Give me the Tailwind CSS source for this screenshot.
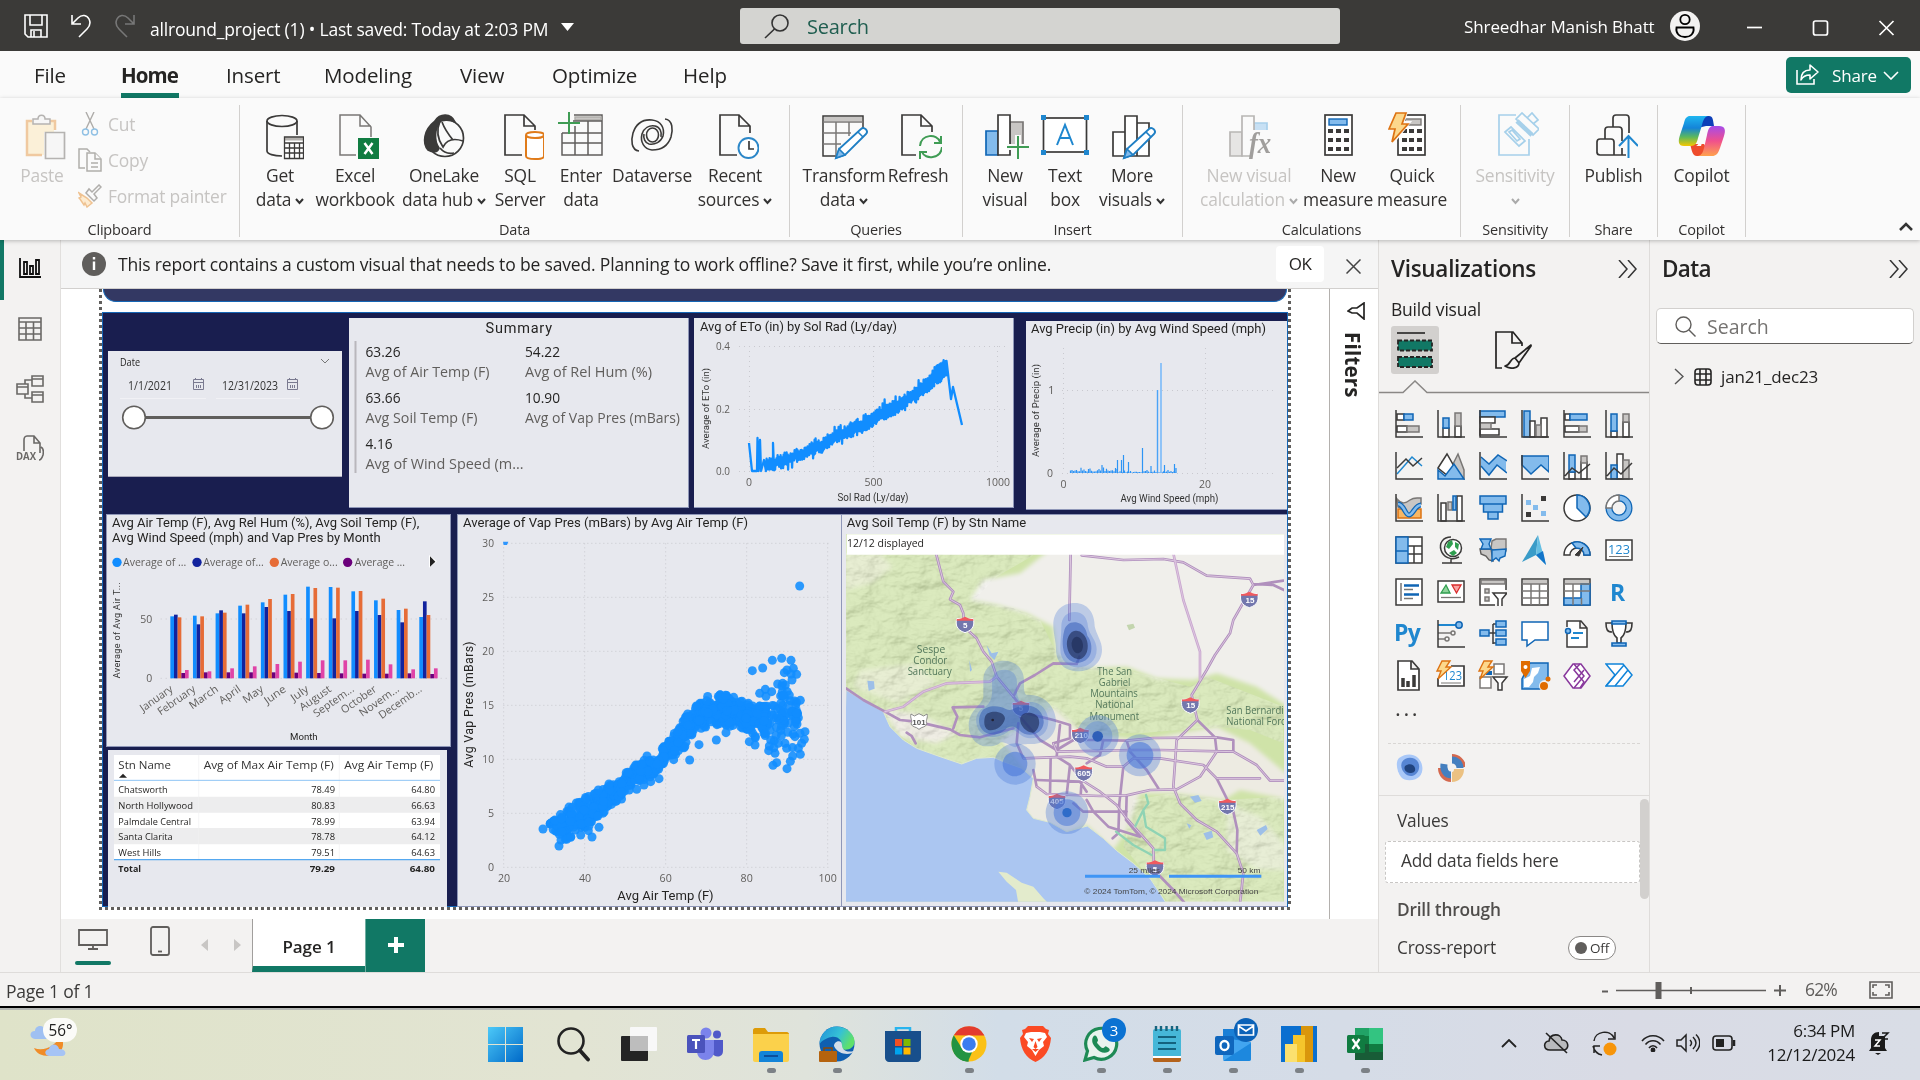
<!DOCTYPE html>
<html lang="en">
<head>
<meta charset="utf-8">
<title>allround_project (1)</title>
<script src="https://cdn.jsdelivr.net/npm/@tailwindcss/browser@4"></script>
</head>
<body class="w-[1920px] h-[1080px] overflow-hidden flex flex-col bg-[#f3f2f1] text-[#252423] font-['Open_Sans','Noto_Sans',sans-serif] whitespace-nowrap">

<!-- Title bar -->
<header class="h-[51px] shrink-0 bg-[#3b3a38] flex items-center text-white">
  <svg class="ml-6 w-6 h-6 shrink-0" viewBox="0 0 24 24" fill="none" stroke="#fff" stroke-width="1.6"><path d="M1 1h22v22H4l-3-3z"/><path d="M6 1v10h12V1M7 23v-7h10v7M10 17v6"/></svg>
  <svg class="ml-[22px] w-[22px] h-6 shrink-0" viewBox="0 0 22 24" fill="none" stroke="#fff" stroke-width="1.6"><path d="M2 1v9h9M2 10l6-6c4-4 9-3 11 1s1 7-2 10l-8 8"/></svg>
  <svg class="ml-[22px] w-[22px] h-6 shrink-0" viewBox="0 0 22 24" fill="none" stroke="#777" stroke-width="1.6"><path d="M20 1v9h-9M20 10l-6-6c-4-4-9-3-11 1s-1 7 2 10l8 8"/></svg>
  <div class="ml-[14px] mt-[8px] w-[401px] text-[17.5px] tracking-[-0.011em]">allround_project (1) • Last saved: Today at 2:03 PM</div>
  <svg class="ml-[10px] mt-[3px] w-[13px] h-2 shrink-0" viewBox="0 0 13 8"><path d="M0 0h13L6.500 8z" fill="#fff"/></svg>
  <div class="ml-[166px] w-[600px] h-9 shrink-0 rounded-[3px] bg-[#d4d4d1] flex items-center">
    <svg class="ml-6 w-[26px] h-[26px]" viewBox="0 0 26 26" fill="none" stroke="#333" stroke-width="1.6"><circle cx="16" cy="10" r="8"/><path d="M10.500 16L1 25"/></svg>
    <span class="ml-[17px] mt-[3px] text-[20px] tracking-[-0.012em] text-[#205e50]">Search</span>
  </div>
  <div class="ml-[124px] mt-[2px] w-[191px] text-[17px] tracking-[-0.006em]">Shreedhar Manish Bhatt</div>
  <svg class="ml-[15px] w-[30px] h-[30px] shrink-0" viewBox="0 0 30 30" fill="none"><circle cx="15" cy="15" r="15" fill="#f3f2f1"/><circle cx="15" cy="8.500" r="4.700" stroke="#000" stroke-width="1.800"/><path d="M6.500 16.500h17c1 6-3 9.500-8.500 9.500s-9.500-3.500-8.500-9.500z" stroke="#000" stroke-width="1.800"/></svg>
  <svg class="ml-[47px] w-[149px] h-4 shrink-0 mt-[5px]" viewBox="0 0 149 16" fill="none" stroke="#fff" stroke-width="1.700"><path d="M0 7.500h15"/><rect x="66.500" y="1" width="14" height="14" rx="2"/><path d="M132.500 1l14 14M146.500 1l-14 14"/></svg>
</header>

<!-- Ribbon tabs -->
<nav class="h-[47px] shrink-0 bg-[#fafafa] flex text-[20.5px] leading-[49px] tracking-[-0.006em] pl-[34px] gap-[47px] relative">
  <div class="w-[31px] mr-[9px]">File</div>
  <div class="w-[58px] font-bold border-b-[5px] border-[#117865] tracking-[-0.045em]">Home</div>
  <div class="w-[51px]">Insert</div>
  <div class="w-[89px]">Modeling</div>
  <div class="w-[45px]">View</div>
  <div class="w-[84px]">Optimize</div>
  <div class="w-[43px]">Help</div>
  <button class="ml-auto mr-[9px] mt-[6px] w-[125px] h-9 rounded-[5px] bg-[#117865] text-white flex items-center text-[17px] tracking-[-0.01em]">
    <svg class="ml-[10px] w-6 h-[22px]" viewBox="0 0 24 22" fill="none" stroke="#fff" stroke-width="1.600"><path d="M1 6v14h17v-5"/><path d="M5 16C5 9 9 6 14 6V1l8 7-8 7v-4c-4 0-7 1-9 5z" stroke-linejoin="round"/></svg>
    <span class="ml-[12px]">Share</span>
    <svg class="ml-[6px] w-4 h-[9px]" viewBox="0 0 16 9" fill="none" stroke="#fff" stroke-width="1.600"><path d="M1 1l7 7 7-7"/></svg>
  </button>
</nav>

<!-- Ribbon -->
<section class="h-[142px] shrink-0 bg-[#fafafa] flex pt-[7px] relative z-10 shadow-[0_1px_4px_rgba(0,0,0,.25)] text-[17.4px] leading-6 tracking-[-0.012em] text-center text-[#333130]">
  <div class="w-[240px] h-[132px] border-r border-[#d2d0ce] flex flex-col">
    <div class="flex-1 flex text-[#c6c4c2]">
      <div class="ml-[18px] w-[48px] pt-[7px] flex flex-col items-center">
        <svg class="w-12 h-12" viewBox="0 0 48 48" fill="none"><path d="M9 9h27v11H26v23H9z" fill="#fbf0d8"/><path d="M24 43H9V9h5M31 9h6v9" stroke="#f0c9a0" stroke-width="2.500"/><path d="M15 12V7h5c0-5 7-5 7 0h5v5z" fill="#f6f6f6" stroke="#b5b3b1" stroke-width="1.500"/><path d="M27.500 20.500h19v26h-19z" fill="#f6f6f6" stroke="#b5b3b1" stroke-width="1.700"/></svg>
        <span class="mt-[3px]">Paste</span>
      </div>
      <div class="ml-3 pt-[7px] flex flex-col items-start gap-3">
        <div class="flex items-center gap-[6px]"><svg class="w-6 h-6" viewBox="0 0 24 24" fill="none" stroke="#aeaca9" stroke-width="1.400"><path d="M8 0l8 17M16 0L8 17"/><circle cx="7.500" cy="20" r="3" stroke="#8fc0e4"/><circle cx="16.500" cy="20" r="3" stroke="#8fc0e4"/></svg>Cut</div>
        <div class="flex items-center gap-[6px]"><svg class="w-6 h-6" viewBox="0 0 24 24" fill="#fafafa" stroke="#b0aeab" stroke-width="1.500"><path d="M7 20H1V1h8l3 3"/><path d="M9 5h8l6 6v12H9z"/><path d="M17 5v6h6M13 15h7M13 19h7"/></svg>Copy</div>
        <div class="flex items-center gap-[6px]"><svg class="w-6 h-6" viewBox="0 0 24 24" fill="none" stroke-width="1.500"><path d="M1 9l8 5 5 5-5 4-2-4-1 2-4-6-1-1 2-1z" fill="#fdebd0" stroke="#efc291"/><path d="M8 9l8 8 3-3-3-4 7-7-2-2-7 7-3-3z" fill="#fafafa" stroke="#b0aeab"/></svg>Format painter</div>
      </div>
    </div>
    <div class="text-[14.5px] leading-[18px] -mb-[2px]">Clipboard</div>
  </div>

  <div class="w-[550px] h-[132px] border-r border-[#d2d0ce] flex flex-col">
    <div class="flex-1 flex pl-1">
      <div class="w-[72px] pt-[7px] flex flex-col items-center">
        <svg class="w-12 h-12" viewBox="-1 0 48 48" fill="none" stroke="#3b3a39" stroke-width="1.700"><path d="M25 44c-8 0-15-2-15-5V9M40 9v14"/><ellipse cx="25" cy="9" rx="15" ry="5.500"/><rect x="27" y="25" width="22" height="22" fill="#fff" stroke="none"/><path d="M27 27h20" stroke="#b3b0ad" stroke-width="3"/><path d="M27.500 25h19v21.500h-19zM27 31h20M27 36h20M27 41h20M32.500 31v16M37.500 31v16M42.500 31v16" stroke-width="1.300"/></svg>
        <div class="mt-[3px]">Get<br>data<svg class="inline ml-1 w-[9px] h-[7px]" viewBox="0 0 9 7" fill="none" stroke="#333" stroke-width="2"><path d="M1 1l3.500 4L8 1"/></svg></div>
      </div>
      <div class="w-[78px] pt-[7px] flex flex-col items-center">
        <svg class="w-12 h-12" viewBox="0 0 48 48" fill="none" stroke="#797775" stroke-width="1.500"><path d="M25 43H9V3h20l11 12v10M29 3v11h11"/><rect x="27" y="26" width="21" height="21" fill="#107c41" stroke="none"/><path d="M33.500 31l8 11M41.500 31l-8 11" stroke="#fff" stroke-width="2.500"/></svg>
        <div class="mt-[3px] flex flex-col items-center"><span>Excel</span><span>workbook</span></div>
      </div>
      <div class="w-[100px] pt-[7px] flex flex-col items-center">
        <svg class="w-12 h-12" viewBox="0 0 48 48" fill="none" stroke="#3b3a39" stroke-width="1.700"><path d="M14 10C4 18 2 31 8 38c6 3 10 2 11-2C14 29 14 17 21 8z" fill="#3b3a39"/><circle cx="25" cy="26" r="18.500"/><path d="M15 9c5-8 16-8 20 1-6-3-13-2-16 0z" fill="#3b3a39"/><path d="M20 9c-4 10-2 19 3 26 4-8 11-9 20-6M22 10c3 8 6 12 11 18M20 36c4 5 9 6 14 5"/></svg>
        <div class="mt-[3px]">OneLake<br>data hub<svg class="inline ml-1 w-[9px] h-[7px]" viewBox="0 0 9 7" fill="none" stroke="#333" stroke-width="2"><path d="M1 1l3.500 4L8 1"/></svg></div>
      </div>
      <div class="w-[52px] pt-[7px] flex flex-col items-center">
        <svg class="w-12 h-12" viewBox="0 0 48 48" fill="none" stroke="#3b3a39" stroke-width="1.700"><path d="M26 43H9V3h19l11 11v4M28 3v11h11"/><path d="M30 23v21c0 4 18 4 18 0V23" fill="#fff" stroke="#e07b1a" stroke-width="2"/><ellipse cx="39" cy="23" rx="9" ry="3" fill="#fff" stroke="#e07b1a" stroke-width="2"/></svg>
        <div class="mt-[3px]">SQL<br>Server</div>
      </div>
      <div class="w-[70px] pt-[7px] flex flex-col items-center">
        <svg class="w-12 h-12" viewBox="0 0 48 48" fill="none" stroke="#605e5c" stroke-width="1.500"><path d="M5 21v22h40V3H17"/><path d="M18 5h26v3H18z" fill="#c8c6c4" stroke="#b0aeab"/><path d="M16 9h29M5 21h40M5 31h40M18 14v29M31 9v34"/><path d="M1 11h22M12 0v22" stroke="#3f9c54" stroke-width="2"/></svg>
        <div class="mt-[3px]">Enter<br>data</div>
      </div>
      <div class="w-[72px] pt-[7px] flex flex-col items-center">
        <svg class="w-12 h-12" viewBox="0 0 48 48" fill="none" stroke="#3b3a39" stroke-width="1.600"><path d="M37 7c8 1 8 11 6 18-3 9-9 13-19 13-8-1-12-8-10-16 2-6 7-9 13-8 5 1 7 6 6 11"/><path d="M11 39c-8-1-8-11-6-18C8 12 14 7 24 8c9 1 13 8 11 16-2 6-8 9-14 8-4-1-6-6-5-10"/><ellipse cx="24.500" cy="23" rx="6" ry="7"/></svg>
        <div class="mt-[3px]">Dataverse</div>
      </div>
      <div class="w-[94px] pt-[7px] flex flex-col items-center">
        <svg class="w-12 h-12" viewBox="0 0 48 48" fill="none" stroke="#3b3a39" stroke-width="1.700"><path d="M26 43H9V3h19l11 11v7M28 3v11h11"/><circle cx="37.500" cy="36" r="10" fill="#fff" stroke="#2c87c8" stroke-width="1.900"/><path d="M38 29v8h5"/></svg>
        <div class="mt-[3px]">Recent<br>sources<svg class="inline ml-1 w-[9px] h-[7px]" viewBox="0 0 9 7" fill="none" stroke="#333" stroke-width="2"><path d="M1 1l3.500 4L8 1"/></svg></div>
      </div>
    </div>
    <div class="text-[14.5px] leading-[18px] -mb-[2px]">Data</div>
  </div>

  <div class="w-[173px] h-[132px] border-r border-[#d2d0ce] flex flex-col">
    <div class="flex-1 flex pl-[9px]">
      <div class="w-[90px] pt-[7px] flex flex-col items-center">
        <svg class="w-12 h-12" viewBox="0 0 48 48" fill="none" stroke="#797775" stroke-width="1.500"><path d="M19 44H3V4h40v12" stroke="#3b3a39"/><path d="M4 5h38v4H4z" fill="#c8c6c4" stroke="none"/><path d="M3 10h40M3 21h28M3 32h18M16 10v34M29 10v14"/><path d="M16 46l3-9 22-20c3-3 8 2 5 5L25 43z" fill="#fff" stroke="#1f7fc4" stroke-width="1.800"/><path d="M16 46l3-9 6 6z" fill="#83bbec" stroke="#1f7fc4"/><path d="M38 20l5 5" stroke="#1f7fc4"/></svg>
        <div class="mt-[3px]">Transform<br>data<svg class="inline ml-1 w-[9px] h-[7px]" viewBox="0 0 9 7" fill="none" stroke="#333" stroke-width="2"><path d="M1 1l3.500 4L8 1"/></svg></div>
      </div>
      <div class="w-[58px] pt-[7px] flex flex-col items-center">
        <svg class="w-12 h-12" viewBox="0 0 48 48" fill="none" stroke="#3b3a39" stroke-width="1.700"><path d="M22 43H8V3h19l11 11v6M27 3v11h11"/><path d="M26 34c1-12 17-13 20-4M48 35c-1 12-17 13-20 5M47 24v7h-7M26 47v-7h7" stroke="#3f9c54" stroke-width="2"/></svg>
        <div class="mt-[3px]">Refresh</div>
      </div>
    </div>
    <div class="text-[14.5px] leading-[18px] -mb-[2px]">Queries</div>
  </div>

  <div class="w-[220px] h-[132px] border-r border-[#d2d0ce] flex flex-col">
    <div class="flex-1 flex pl-[12px]">
      <div class="w-[60px] pt-[7px] flex flex-col items-center">
        <svg class="w-12 h-12" viewBox="0 0 48 48" fill="none" stroke-width="1.700"><path d="M29 10h13v24H29z" fill="#c8c6c4" stroke="#797775"/><path d="M5 19h12v24H5z" fill="#83bbec" stroke="#1066b5"/><path d="M17 3h12v40H17z" fill="#fff" stroke="#3b3a39"/><path d="M26 35h24M37 23v24" stroke="#fafafa" stroke-width="6"/><path d="M26 35h22M37 24v23" stroke="#3f9c54" stroke-width="2"/></svg>
        <div class="mt-[3px]">New<br>visual</div>
      </div>
      <div class="w-[60px] pt-[7px] flex flex-col items-center">
        <svg class="w-12 h-12" viewBox="0 0 48 48" fill="none"><rect x="2.500" y="6" width="43" height="34" fill="#fff" stroke="#3b3a39" stroke-width="1.700"/><path d="M0 3h5v5H0zM43 3h5v5h-5zM0 38h5v5H0zM43 38h5v5h-5z" fill="#1f87cf"/><path d="M16 33l8-20 8 20M19 26h10" stroke="#1f87cf" stroke-width="2"/></svg>
        <div class="mt-[3px]">Text<br>box</div>
      </div>
      <div class="w-[74px] pt-[7px] flex flex-col items-center">
        <svg class="w-12 h-12" viewBox="0 0 48 48" fill="none" stroke="#3b3a39" stroke-width="1.700"><path d="M5 20h12v24H5zM17 4h12v40H17zM29 11h12v33H29z" fill="#fff"/><path d="M16 46l3-9 22-20c3-3 8 2 5 5L25 43z" fill="#fff" stroke="#1f7fc4" stroke-width="1.800"/><path d="M16 46l3-9 6 6z" fill="#83bbec" stroke="#1f7fc4"/><path d="M38 20l5 5" stroke="#1f7fc4"/></svg>
        <div class="mt-[3px]">More<br>visuals<svg class="inline ml-1 w-[9px] h-[7px]" viewBox="0 0 9 7" fill="none" stroke="#333" stroke-width="2"><path d="M1 1l3.500 4L8 1"/></svg></div>
      </div>
    </div>
    <div class="text-[14.5px] leading-[18px] -mb-[2px]">Insert</div>
  </div>

  <div class="w-[278px] h-[132px] border-r border-[#d2d0ce] flex flex-col">
    <div class="flex-1 flex pl-[15px]">
      <div class="w-[102px] pt-[7px] flex flex-col items-center text-[#c6c4c2]">
        <svg class="w-12 h-12" viewBox="0 0 48 48" fill="none" stroke="#b8b6b4" stroke-width="1.700"><path d="M29 11h13v8H29z" fill="#c7e0f4" stroke="#a9cfea"/><path d="M5 20h12v24H5z" fill="#e6e5e4"/><path d="M17 4h12v40H17z" fill="#fafafa"/><path d="M25 18h24v28H25z" fill="#fafafa" stroke="none"/><text x="24" y="41" font-family="Liberation Serif, serif" font-style="italic" font-weight="bold" font-size="30" fill="#a09e9c" stroke="none" textLength="22" lengthAdjust="spacingAndGlyphs">fx</text></svg>
        <div class="mt-[3px]">New visual<br>calculation<svg class="inline ml-1 w-[9px] h-[7px]" viewBox="0 0 9 7" fill="none" stroke="#aaa" stroke-width="2"><path d="M1 1l3.500 4L8 1"/></svg></div>
      </div>
      <div class="w-[76px] pt-[7px] flex flex-col items-center">
        <svg class="w-12 h-12" viewBox="0 0 48 48"><rect x="11" y="3" width="27" height="40" fill="#fff" stroke="#3b3a39" stroke-width="1.700"/><rect x="15" y="7" width="18" height="6" fill="#83bbec" stroke="#1066b5" stroke-width="1.400"/><path d="M14 17h5v4h-5zM22 17h5v4h-5zM30 17h5v4h-5zM14 26h5v4h-5zM22 26h5v4h-5zM30 26h5v4h-5zM14 35h5v4h-5zM22 35h5v4h-5zM30 35h5v4h-5z" fill="#3b3a39"/></svg>
        <div class="mt-[3px]">New<br>measure</div>
      </div>
      <div class="w-[72px] pt-[7px] flex flex-col items-center">
        <svg class="w-12 h-12" viewBox="0 0 48 48"><rect x="10" y="3" width="27" height="40" fill="#fff" stroke="#3b3a39" stroke-width="1.700"/><rect x="17" y="7" width="16" height="6" fill="#c8c6c4" stroke="#797775" stroke-width="1.400"/><path d="M14 17h5v4h-5zM21 17h5v4h-5zM29 17h5v4h-5zM14 26h5v4h-5zM21 26h5v4h-5zM29 26h5v4h-5zM14 35h5v4h-5zM21 35h5v4h-5zM29 35h5v4h-5z" fill="#3b3a39"/><path d="M8 0h10l-4 11h6L4 31l3-14H1z" fill="#fcd88c" stroke="#fafafa" stroke-width="4"/><path d="M8 1h10l-4 11h6L4 30l3-13H1z" fill="#fcd88c" stroke="#dd7312" stroke-width="1.700"/></svg>
        <div class="mt-[3px] flex flex-col items-center"><span>Quick</span><span>measure</span></div>
      </div>
    </div>
    <div class="text-[14.5px] leading-[18px] -mb-[2px]">Calculations</div>
  </div>

  <div class="w-[109px] h-[132px] border-r border-[#d2d0ce] flex flex-col">
    <div class="flex-1 pt-[7px] flex flex-col items-center text-[#c6c4c2]">
      <svg class="w-12 h-12" viewBox="0 0 48 48" fill="none" stroke="#a6d0ea" stroke-width="1.700"><path d="M25 3H8v40h30V27"/><path d="M14 20l6-5 14 14-6 5zM18 20l3-2 8 9-3 2z"/><path d="M25 7l6-6 17 16-6 6z"/><path d="M26 9l15 14" stroke-width="4.500"/><path d="M36 6l5-5 6 7-5 4"/></svg>
      <div class="mt-[3px]">Sensitivity<br><svg class="inline w-[11px] h-[7px]" viewBox="0 0 9 7" fill="none" stroke="#aaa" stroke-width="2"><path d="M1 1l3.500 4L8 1"/></svg></div>
    </div>
    <div class="text-[14.5px] leading-[18px] -mb-[2px]">Sensitivity</div>
  </div>
  <div class="w-[88px] h-[132px] border-r border-[#d2d0ce] flex flex-col">
    <div class="flex-1 pt-[7px] flex flex-col items-center">
      <svg class="w-12 h-12" viewBox="0 0 48 48" fill="none" stroke="#3b3a39" stroke-width="1.700"><path d="M23 15V6c0-2 1-3 3-3h10c2 0 3 1 3 3v15M15 27V18c0-2 1-3 3-3h11c2 0 3 1 3 3v11M7 41V30c0-2 1-3 3-3h11c2 0 3 1 3 3v13M7 40c0 2 1 3 3 3h26M32 36v7"/><path d="M38.500 46V24M29 34l9.500-10 9.500 10" stroke="#1f87cf" stroke-width="2"/></svg>
      <div class="mt-[3px]">Publish</div>
    </div>
    <div class="text-[14.5px] leading-[18px] -mb-[2px]">Share</div>
  </div>
  <div class="w-[88px] h-[132px] border-r border-[#d2d0ce] flex flex-col">
    <div class="flex-1 pt-[7px] flex flex-col items-center">
      <svg class="w-12 h-12" viewBox="0 0 48 48"><defs><linearGradient id="cpa" x1="0" y1="0" x2="0" y2="1"><stop offset="0" stop-color="#1fb6f0"/><stop offset=".4" stop-color="#1484d8"/><stop offset=".7" stop-color="#5cb85c"/><stop offset="1" stop-color="#f5c800"/></linearGradient><linearGradient id="cpb" x1="0" y1="0" x2="0" y2="1"><stop offset="0" stop-color="#a64bea"/><stop offset=".5" stop-color="#f0508c"/><stop offset="1" stop-color="#ffa24d"/></linearGradient></defs>
      <path d="M18 4h13c4 0 4 4 5 10h-8l-8 2z" fill="#0d3fb8"/><path d="M12 32h14l6 10-6 2h-7c-5 0-5-6-7-12z" fill="#ee4c2c"/><path d="M12 4h18c-4 1-5 5-6 9l-4 13c-1 5-3 8-7 8H6c-6 0-6-5-4-11L6 11c1-5 3-7 6-7z" fill="url(#cpa)"/><path d="M27 14h14c6 0 7 4 5 10l-4 12c-2 6-4 8-8 8H20c4-1 5-4 6-8l3-13c1-5 2-8 5-9z" fill="url(#cpb)"/><path d="M24 15h5l-6 19h-5c3-1 4-5 6-19z" fill="#fafafa"/></svg>
      <div class="mt-[3px]">Copilot</div>
    </div>
    <div class="text-[14.5px] leading-[18px] -mb-[2px]">Copilot</div>
  </div>
  <svg class="ml-auto mr-[7px] mt-[117px] w-[14px] h-[9px]" viewBox="0 0 14 9" fill="none" stroke="#333" stroke-width="2.500"><path d="M1 8l6-6 6 6"/></svg>
</section>

<!-- Workspace -->
<main class="h-[732px] shrink-0 flex">
  <aside class="w-[61px] border-r border-[#e1dfdd] bg-[#f3f2f1] flex flex-col">
    <div class="h-[60px] border-l-4 border-[#117865] flex items-center justify-center pr-1 pb-1"><svg class="w-6 h-6" viewBox="0 0 24 24" fill="none" stroke="#111" stroke-width="1.800"><path d="M2 2v19h21M6 6h3v12H6zM12 10h3v8h-3zM18 4h3v14h-3z"/></svg></div>
    <div class="h-[60px] flex items-center justify-center pb-[3px]"><svg class="w-6 h-6" viewBox="0 0 24 24" fill="none" stroke="#6a6866" stroke-width="1.600"><path d="M1 1h22v22H1zM1 5h22M1 11h22M1 17h22M8 5v18M15.500 5v18"/></svg></div>
    <div class="h-[60px] flex items-center justify-center pb-[3px]"><svg class="w-7 h-7" viewBox="0 0 28 28" fill="none" stroke="#6a6866" stroke-width="1.600"><path d="M1 9h11v10H1zM16 1h11v10H16zM16 17h11v10H16zM1 12h11M16 4h11M16 20h11M9 9V5h7M9 19v4h7"/></svg></div>
    <div class="h-[60px] flex items-center justify-center pb-[2px]"><svg class="w-7 h-7" viewBox="0 0 28 28" fill="none" stroke="#6a6866" stroke-width="1.600"><path d="M8 16V5c0-2 1-4 3-4h7l6 7v10M18 1v7h6M25 12c2 1 3 3 2 8-1 3-2 5-4 5"/><text x="0" y="25" fill="#6a6866" stroke="none" font-size="10" font-weight="bold" textLength="20" lengthAdjust="spacingAndGlyphs">DAX</text></svg></div>
  </aside>

  <div class="w-[1318px] flex flex-col border-r border-[#dedcda]">
    <div class="h-[49px] bg-[#f5f5f5] border-b border-[#d2d0ce] flex items-center">
      <svg class="ml-[21px] w-6 h-6" viewBox="0 0 24 24"><circle cx="12" cy="12" r="12" fill="#605e5c"/><path d="M10.800 5h2.400v2.500h-2.400zM10.800 9.500h2.400V18h-2.400z" fill="#fff"/></svg>
      <div class="ml-3 mt-px w-[931px] text-[17.5px] tracking-[-0.0095em]">This report contains a custom visual that needs to be saved. Planning to work offline? Save it first, while you’re online.</div>
      <div class="ml-auto w-12 h-9 rounded bg-white text-center leading-9 text-[17px] tracking-[-0.03em]">OK</div>
      <svg class="ml-[22px] mr-[17px] w-[15px] h-[15px] mt-1" viewBox="0 0 15 15" stroke="#444" stroke-width="1.500"><path d="M.500.500l14 14M14.500.500l-14 14"/></svg>
    </div>
    <div class="flex h-[630px]">
      <div class="w-[1268px] bg-white">
        <!-- Report page: free canvas on which the visuals are placed -->
        <div class="relative ml-[38px] w-[1192px] h-[621px] text-[#252423]">
          <div class="absolute left-0 top-0 w-[3px] h-[618px] bg-[repeating-linear-gradient(#605e5c_0_3px,#fff_3px_6px)]"></div>
          <div class="absolute right-0 top-0 w-[3px] h-[618px] bg-[repeating-linear-gradient(#605e5c_0_3px,#fff_3px_6px)]"></div>
          <div class="absolute left-0 bottom-0 w-full h-[3px] bg-[repeating-linear-gradient(90deg,#605e5c_0_3px,#fff_3px_6px)]"></div>
          <div class="absolute left-[4px] top-0 w-[1184px] h-[13px] bg-[#333863] border border-t-0 border-[#1566b5] rounded-b-[16px]"></div>
          <div class="absolute left-[3px] top-[23px] w-[1186px] h-[595px] bg-[#191e4f] border border-[#1566b5]"></div>

          <!-- Date slicer -->
          <div class="absolute left-[9px] top-[62px] w-[234px] h-[126px] bg-[#e7e8ee] border-b border-[#aab]">
            <svg class="w-[234px] h-[125px]" viewBox="108 351 234 125" fill="none">
              <text x="120" y="365.500" font-size="10.500" fill="#252423" textLength="20" lengthAdjust="spacingAndGlyphs">Date</text>
              <path d="M321 359l4 4 4-4" stroke="#777"/>
              <g font-size="12" fill="#333"><text x="128" y="390" textLength="44" lengthAdjust="spacingAndGlyphs">1/1/2021</text><text x="222" y="390" textLength="56" lengthAdjust="spacingAndGlyphs">12/31/2023</text></g>
              <g stroke="#7a7a90"><path d="M193.500 379.500h10v10h-10zM193.500 382.500h10M195.500 378v2M201.500 378v2M196.500 385v3M198.500 385v3M200.500 385v3"/><path d="M287.500 379.500h10v10h-10zM287.500 382.500h10M289.500 378v2M295.500 378v2M290.500 385v3M292.500 385v3M294.500 385v3"/></g>
              <path d="M120 398.500h86M216 398.500h84" stroke="#f1f1f5"/>
              <path d="M134 417.500h188" stroke="#605e5c" stroke-width="3"/>
              <circle cx="134" cy="417.500" r="11.300" fill="#fff" stroke="#605e5c" stroke-width="1.600"/><circle cx="322" cy="417.500" r="11.300" fill="#fff" stroke="#605e5c" stroke-width="1.600"/>
            </svg>
          </div>

          <!-- Summary card -->
          <div class="absolute left-[250px] top-[29px] w-[340px] h-[190px] bg-[#e7e8ee] border-r border-b border-[#8f97b8]">
            <svg class="w-[339px] h-[189px]" viewBox="349 318 339 189">
              <text x="485.500" y="333" font-family="Roboto" font-size="14.500" fill="#252423" textLength="66.500" lengthAdjust="spacing">Summary</text>
              <path d="M355.500 341v132" stroke="#b9b7bc" stroke-width="2"/>
              <g font-size="14.500" fill="#252423"><text x="365.500" y="357" textLength="35" lengthAdjust="spacingAndGlyphs">63.26</text><text x="525" y="357" textLength="35" lengthAdjust="spacingAndGlyphs">54.22</text><text x="365.500" y="403" textLength="35" lengthAdjust="spacingAndGlyphs">63.66</text><text x="525" y="403" textLength="35" lengthAdjust="spacingAndGlyphs">10.90</text><text x="365.500" y="449" textLength="27" lengthAdjust="spacingAndGlyphs">4.16</text></g>
              <g font-size="14.500" fill="#605e5c"><text x="365.500" y="377" textLength="124" lengthAdjust="spacingAndGlyphs">Avg of Air Temp (F)</text><text x="525" y="377" textLength="127" lengthAdjust="spacingAndGlyphs">Avg of Rel Hum (%)</text><text x="365.500" y="422.500" textLength="112" lengthAdjust="spacingAndGlyphs">Avg Soil Temp (F)</text><text x="525" y="422.500" textLength="155" lengthAdjust="spacingAndGlyphs">Avg of Vap Pres (mBars)</text><text x="365.500" y="469" textLength="158" lengthAdjust="spacingAndGlyphs">Avg of Wind Speed (m...</text></g>
            </svg>
          </div>

          <!-- ETo line chart -->
          <div class="absolute left-[595px] top-[29px] w-[320px] h-[190px] bg-[#e7e8ee] border-r border-b border-[#8f97b8]">
            <svg class="w-[319px] h-[189px]" viewBox="694 318 319 189" fill="none">
              <text x="700" y="330.500" font-family="Roboto" font-size="13" fill="#252423" textLength="197" lengthAdjust="spacingAndGlyphs">Avg of ETo (in) by Sol Rad (Ly/day)</text>
              <path d="M739 346.500h266M739 409.500h266M739 471.500h266M749.500 346v126M873.500 346v126M997.500 346v126" stroke="#c9c9cf" stroke-dasharray="1 4"/>
              <g font-size="11.500" fill="#605e5c"><text x="716" y="350" textLength="14" lengthAdjust="spacingAndGlyphs">0.4</text><text x="716" y="413" textLength="14" lengthAdjust="spacingAndGlyphs">0.2</text><text x="716" y="475" textLength="14" lengthAdjust="spacingAndGlyphs">0.0</text><text x="746" y="486" textLength="6" lengthAdjust="spacingAndGlyphs">0</text><text x="864.500" y="486" textLength="18" lengthAdjust="spacingAndGlyphs">500</text><text x="986" y="486" textLength="24" lengthAdjust="spacingAndGlyphs">1000</text></g>
              <text x="837.500" y="501" font-family="Roboto" font-size="10" fill="#333" textLength="71" lengthAdjust="spacingAndGlyphs">Sol Rad (Ly/day)</text>
              <text transform="translate(708.500 449) rotate(-90)" font-family="Roboto" font-size="9.500" fill="#333" textLength="81">Average of ETo (in)</text>
              <path id="eto" stroke="#118dff" stroke-width="2.300" stroke-linejoin="round"/>
            </svg>
          </div>

          <!-- Precipitation column chart -->
          <div class="absolute left-[927px] top-[32px] w-[261px] h-[189px] bg-[#e7e8ee] border-b border-[#8f97b8]">
            <svg class="w-[261px] h-[188px]" viewBox="1026 321 261 188" fill="none">
              <text x="1031" y="333" font-family="Roboto" font-size="13" fill="#252423" textLength="235" lengthAdjust="spacingAndGlyphs">Avg Precip (in) by Avg Wind Speed (mph)</text>
              <path d="M1062 390.500h215M1062 473.500h215M1063.500 348v125M1205.500 348v125" stroke="#c9c9cf" stroke-dasharray="1 4"/>
              <g font-size="11.500" fill="#605e5c"><text x="1048" y="394">1</text><text x="1047" y="477" textLength="6" lengthAdjust="spacingAndGlyphs">0</text><text x="1060.500" y="488" textLength="6" lengthAdjust="spacingAndGlyphs">0</text><text x="1199" y="488" textLength="12" lengthAdjust="spacingAndGlyphs">20</text></g>
              <text x="1120.500" y="502" font-family="Roboto" font-size="10" fill="#333" textLength="98" lengthAdjust="spacingAndGlyphs">Avg Wind Speed (mph)</text>
              <text transform="translate(1039 457) rotate(-90)" font-family="Roboto" font-size="9.500" fill="#333" textLength="93">Average of Precip (in)</text>
              <path id="precip" stroke="#2d94f5" stroke-width="1.200"/>
              <path d="M1157.500 473V390" stroke="#4ba3f7" stroke-width="1.400"/><path d="M1161 473V363" stroke="#86bff8" stroke-width="1.800"/>
            </svg>
          </div>

          <!-- Clustered columns by month -->
          <div class="absolute left-[7px] top-[225px] w-[345px] h-[233px] bg-[#e7e8ee] border border-[#8f97b8]">
            <svg class="w-[343px] h-[231px]" viewBox="21 15 1029 693" fill="none">
              <g font-family="Roboto" font-size="39" fill="#252423"><text x="36" y="51" textLength="922" lengthAdjust="spacingAndGlyphs">Avg Air Temp (F), Avg Rel Hum (%), Avg Soil Temp (F),</text><text x="36" y="96" textLength="806" lengthAdjust="spacingAndGlyphs">Avg Wind Speed (mph) and Vap Pres by Month</text></g>
              <circle cx="51" cy="157" r="14" fill="#118dff"/><circle cx="291" cy="157" r="14" fill="#12239e"/><circle cx="523" cy="157" r="14" fill="#e66c37"/><circle cx="743" cy="157" r="14" fill="#6b007b"/>
              <g font-size="33" fill="#605e5c"><text x="69" y="168" textLength="190" lengthAdjust="spacingAndGlyphs">Average of ...</text><text x="310" y="168" textLength="181" lengthAdjust="spacingAndGlyphs">Average of...</text><text x="542" y="168" textLength="171" lengthAdjust="spacingAndGlyphs">Average o...</text><text x="764" y="168" textLength="151" lengthAdjust="spacingAndGlyphs">Average ...</text></g>
              <path d="M987 135v38l24-19z" fill="#fff"/><path d="M990 139v31l16-15z" fill="#222"/>
              <path d="M182 327h870M182 505h870" stroke="#c9c9cf" stroke-width="3" stroke-dasharray="3 12"/>
              <g font-size="33" fill="#605e5c"><text x="121" y="339" textLength="36" lengthAdjust="spacingAndGlyphs">50</text><text x="139" y="516" textLength="18" lengthAdjust="spacingAndGlyphs">0</text></g>
              <g id="months" font-size="32" fill="#605e5c"></g>
              <text x="570" y="690" font-family="Roboto" font-size="29" fill="#252423" textLength="83" lengthAdjust="spacingAndGlyphs">Month</text>
              <text transform="translate(59 505) rotate(-90)" font-family="Roboto" font-size="27" fill="#333" textLength="288">Average of Avg Air T...</text>
            </svg>
          </div>

          <!-- Station table -->
          <div class="absolute left-[9px] top-[461px] w-[339px] h-[157px] bg-[#e7e8ee]">
            <svg class="w-full h-full" viewBox="24 720 1017 471">
              <path d="M42 735h978v314H42z" fill="#fff"/><path d="M42 860h978v48H42zM42 954h978v49H42z" fill="#ededee"/>
              <path d="M296 735v312M718 735v312" stroke="#f0f0f2" stroke-width="2"/>
              <path d="M42 811h978" stroke="#8ec5f5" stroke-width="3"/><path d="M42 1049h978" stroke="#55a8f0" stroke-width="4"/>
              <g font-size="35" fill="#333"><text x="55" y="777" textLength="158" lengthAdjust="spacingAndGlyphs">Stn Name</text><text x="311" y="777" textLength="390" lengthAdjust="spacingAndGlyphs">Avg of Max Air Temp (F)</text><text x="733" y="777" textLength="267" lengthAdjust="spacingAndGlyphs">Avg Air Temp (F)</text></g>
              <path d="M57 803h24l-12-12z" fill="#252423"/>
              <g font-size="28" fill="#252423"><text x="55" y="848" textLength="148" lengthAdjust="spacingAndGlyphs">Chatsworth</text><text x="55" y="896" textLength="224" lengthAdjust="spacingAndGlyphs">North Hollywood</text><text x="55" y="944" textLength="218" lengthAdjust="spacingAndGlyphs">Palmdale Central</text><text x="55" y="989" textLength="163" lengthAdjust="spacingAndGlyphs">Santa Clarita</text><text x="55" y="1037" textLength="128" lengthAdjust="spacingAndGlyphs">West Hills</text>
              <g text-anchor="end"><text x="705" y="848">78.49</text><text x="705" y="896">80.83</text><text x="705" y="944">78.99</text><text x="705" y="989">78.78</text><text x="705" y="1037">79.51</text><text x="1005" y="848">64.80</text><text x="1005" y="896">66.63</text><text x="1005" y="944">63.94</text><text x="1005" y="989">64.12</text><text x="1005" y="1037">64.63</text></g>
              <g font-weight="bold"><text x="55" y="1085" textLength="68" lengthAdjust="spacingAndGlyphs">Total</text><text x="629" y="1085" textLength="76" lengthAdjust="spacingAndGlyphs">79.29</text><text x="929" y="1085" textLength="76" lengthAdjust="spacingAndGlyphs">64.80</text></g></g>
            </svg>
          </div>

          <!-- Scatter chart -->
          <div class="absolute left-[358px] top-[225px] w-[385px] h-[393px] bg-[#e7e8ee] border border-[#8f97b8]">
            <svg class="w-[383px] h-[391px]" viewBox="9 15 1149 1173" fill="none">
              <text x="24" y="51" font-family="Roboto" font-size="38" fill="#252423" textLength="855" lengthAdjust="spacingAndGlyphs">Average of Vap Pres (mBars) by Avg Air Temp (F)</text>
              <path d="M145 100h975M145 262h975M145 424h975M145 586h975M145 748h975M145 910h975M145 1072h975M146 100v972M389 100v972M632 100v972M875 100v972M1118 100v972" stroke="#c9c9cf" stroke-width="3" stroke-dasharray="3 9"/>
              <g font-size="32" fill="#605e5c" text-anchor="end"><text x="117" y="111" textLength="35" lengthAdjust="spacingAndGlyphs">30</text><text x="117" y="273" textLength="35" lengthAdjust="spacingAndGlyphs">25</text><text x="117" y="435" textLength="35" lengthAdjust="spacingAndGlyphs">20</text><text x="117" y="597" textLength="35" lengthAdjust="spacingAndGlyphs">15</text><text x="117" y="759" textLength="35" lengthAdjust="spacingAndGlyphs">10</text><text x="117" y="921">5</text><text x="117" y="1083">0</text></g>
              <g font-size="32" fill="#605e5c" text-anchor="middle"><text x="147" y="1116">20</text><text x="390" y="1116">40</text><text x="632" y="1116">60</text><text x="875" y="1116">80</text><text x="1118" y="1116">100</text></g>
              <text x="487" y="1170" font-family="Roboto" font-size="37" fill="#252423" textLength="289" lengthAdjust="spacingAndGlyphs">Avg Air Temp (F)</text>
              <text transform="translate(54 773) rotate(-90)" font-family="Roboto" font-size="37" fill="#252423" textLength="379">Avg Vap Pres (mBars)</text>
              <path d="M144 95h16l-4 10h-10z" fill="#2d96ff"/>
              <g id="dots" fill="#118dff" fill-opacity=".88"></g>
            </svg>
          </div>

          <!-- Heat map of stations -->
          <div class="absolute left-[743px] top-[225px] w-[445px] h-[393px] bg-[#e7e8ee] border-t border-b border-[#8f97b8]">
            <svg class="w-[445px] h-[391px]" viewBox="6 15 1335 1173" fill="none">
              <defs>
                <clipPath id="mapClip"><rect x="18" y="72" width="1314" height="1103"/></clipPath>
                <filter id="relief" x="0" y="0" width="1" height="1"><feTurbulence type="fractalNoise" baseFrequency=".011 .018" numOctaves="5" seed="7"/><feDiffuseLighting surfaceScale="26" lighting-color="#fff"><feDistantLight azimuth="225" elevation="62"/></feDiffuseLighting></filter>
                <filter id="soft"><feGaussianBlur stdDeviation="7"/></filter>
                <clipPath id="hills"><path d="M18 130H590L470 200 400 270 520 295 600 330 650 430 700 470 860 480 1050 530 1100 500 1330 590V700L1230 660 1130 650 900 670 730 670 640 590 480 700 540 770 440 740 365 762 230 715 150 650 130 605 18 540zM880 870L1000 850 1150 870 1330 860V1176H985L930 1105 850 1010z"/></clipPath>
                <g id="shield"><path d="M-25-16h50c4 18 1 34-25 42-26-8-29-24-25-42z" fill="#7377ad" stroke="#fff" stroke-width="3"/><path d="M-25-16c8 3 17-3 25-6 8 3 17 9 25 6v6h-50z" fill="#f05a5e"/></g>
              </defs>
              <g clip-path="url(#mapClip)">
                <path d="M18 72h1314v1103H18z" fill="#cfe3a8"/>
                <g filter="url(#soft)">
                  <path d="M18 130h100l40 40-60 50-80 20zM60 480l170-20 60 60-120 60-130-50z" fill="#e0e9c4"/>
                  <path d="M640 110L540 190 430 210 390 270 470 285 560 310 640 350 650 430 700 475 860 470 950 505 1060 510 1130 490 1250 530 1360 600V110z" fill="#f0efeb"/>
                  <path d="M480 690L560 640 640 590 730 670 900 690 1130 650 1230 700 1350 800 1350 870 1200 840 1150 870 1000 850 900 850 860 960 820 1020 740 945 680 970 570 930 550 890 575 810z" fill="#edebe2"/>
                  <path d="M130 600l100 10 120 60-60 30-110-20z" fill="#ebe9dc"/>
                  <path d="M1160 880l100 40 90 100v60h-100l-90-60z" fill="#e0e9c8"/>
                </g>
                <g clip-path="url(#hills)"><path d="M18 72h1314v1103H18z" fill="#9cb" filter="url(#relief)" class="mix-blend-multiply" opacity=".26"/></g>
                <path d="M18 540L60 565 130 605 150 650 190 690 230 715 300 740 365 762 410 745 460 742 490 755 545 775 580 805 570 860 560 900 580 925 630 937 680 965 742 948 790 985 830 1022 880 1060 930 1105 960 1150 985 1190H0z" fill="#abc6f1" stroke="#dfe9cf" stroke-width="3"/>
                <path d="M475 1085L500 1088 545 1118 580 1130 610 1165 625 1180H535L528 1140 500 1115z" fill="#e3ebcc"/>
                <g fill="#9dbfe8"><path d="M82 512l20 2 2 22-18 6zM440 405l15 25 20-5-12 25-15-15zM388 450l8 30-6 5zM1050 860l25-5 10 18-20 5zM1090 970l25-8 5 20-20 8zM1250 960l28-15 5 12-22 20zM1040 940l14 6-6 10z"/><path d="M860 345l20-4 5 12-18 8z" fill="#c3d5ae"/></g>
                <g fill="none" stroke-linejoin="round" stroke-linecap="round">
                  <g stroke="#b090bd" stroke-width="8">
                    <path d="M288 130L310 215 340 245 330 268 360 285 370 310 372 350 410 385 430 425 455 455 470 500 520 560"/>
                    <path d="M692 130L688 330M520 560L540 520 585 495 640 460 710 462 718 440"/>
                    <path d="M725 136L850 150 970 147 1030 157 1100 197 1230 206 1240 225 1330 212M1240 222L1300 225 1332 240M1240 225L1180 330 1170 370 1125 435 1100 480 1055 555 1072 630 1010 690 1000 830 1020 880 1070 930 1130 965 1190 1030 1210 1090 1200 1180"/>
                    <path d="M18 535L70 570 135 605 180 630 230 635 330 658 360 675 420 682 520 655M340 655L352 620 338 592 430 590M200 668l15 10 12 22"/>
                    <path d="M520 560L560 610 640 630 690 645 690 685 640 700M540 620L600 690 650 720 700 690 760 690 860 692 940 684 1130 682 1180 690 1180 725 1130 725M535 640L530 700 550 745 690 740 740 745 800 770 850 770 880 745 960 745 1090 765 1130 805 1260 805M580 780L590 830 620 852 780 858 860 856 930 840 1010 838 1080 800 1130 725 1125 682 1072 630"/>
                    <path d="M640 700L650 725 880 720 960 720 1180 725 1250 765 1290 812 1332 812M660 645L650 740 690 765 725 810 780 845 830 885 860 925 940 1015 942 1080 1000 1140 1035 1180M632 745L630 855M690 765L680 855M725 810L722 855M860 692L870 725 920 780 955 835M850 770L838 880 835 970 818 985M740 870L760 905 805 950 900 980 858 930 860 856M590 810L720 815 740 845M700 880L730 905 860 905M1130 805L1180 905 1192 960 1190 1030M740 760L780 735 790 690"/>
                  </g>
                  <path d="M135 605L190 590 250 545 320 520 450 515 470 500M1000 130L1030 270 1080 425 1080 510" stroke="#c9a6cf" stroke-width="8"/>
                  <path d="M828 965L880 1005 935 1035M885 950L910 900 925 880 918 855M910 900L918 950 975 985 975 1020 945 1020" stroke="#8fd3b4" stroke-width="7"/>
                  <path d="M288 130L310 215 340 245 330 268 360 285 370 310 372 350 410 385 430 425 455 455 470 500 520 560M692 130L688 330M725 136L850 150 970 147 1030 157 1100 197 1230 206 1240 225 1180 330 1170 370 1125 435 1100 480 1055 555 1072 630 1010 690 1000 830 1020 880 1070 930 1130 965 1190 1030 1210 1090 1200 1180M640 700L650 725 880 720 960 720 1180 725 1250 765 1290 812 1332 812M550 745L690 740 740 745 800 770 850 770 880 745 960 745 1090 765 1130 805 1260 805M860 692L940 684 1130 682M590 830L620 852 780 858 860 856 930 840 1010 838 1080 800 1130 725M725 810L780 845 830 885 860 925 940 1015 942 1080M135 605L190 590 250 545 320 520 450 515 470 500M1000 130L1030 270 1080 425 1080 510" stroke="#dcc6df" stroke-width="3"/>
                </g>
                <g font-size="31" fill="#54795c" text-anchor="middle"><text x="273" y="428">Sespe</text><text x="271" y="461" textLength="102" lengthAdjust="spacingAndGlyphs">Condor</text><text x="269" y="494" textLength="132" lengthAdjust="spacingAndGlyphs">Sanctuary</text><text x="824" y="496" textLength="105" lengthAdjust="spacingAndGlyphs">The San</text><text x="824" y="529" textLength="95" lengthAdjust="spacingAndGlyphs">Gabriel</text><text x="822" y="562" textLength="143" lengthAdjust="spacingAndGlyphs">Mountains</text><text x="823" y="595" textLength="114" lengthAdjust="spacingAndGlyphs">National</text><text x="823" y="629" textLength="149" lengthAdjust="spacingAndGlyphs">Monument</text></g>
                <g font-size="31" fill="#54795c"><text x="1159" y="611" textLength="172" lengthAdjust="spacingAndGlyphs">San Bernardi</text><text x="1159" y="644" textLength="178" lengthAdjust="spacingAndGlyphs">National Forc</text></g>
                <use href="#shield" x="375" y="342"/><use href="#shield" x="543" y="594"/><use href="#shield" x="1228" y="267"/><use href="#shield" x="1051" y="584"/><use href="#shield" x="731" y="788"/><use href="#shield" x="721" y="675"/><use href="#shield" x="651" y="873"/><use href="#shield" x="1162" y="888"/><use href="#shield" x="945" y="1073"/>
                <path d="M213 612l10 6 14-7 14 7 10-6c4 12-6 20 0 30-4 10-16 8-24 16-8-8-20-6-24-16 6-10-4-18 0-30z" fill="#fff" stroke="#777" stroke-width="2.500"/>
                <g font-size="24" font-weight="bold" fill="#fff" text-anchor="middle" font-family="Liberation Sans"><text x="376" y="353">5</text><text x="543" y="602" opacity=".7">5</text><text x="1230" y="278">15</text><text x="1052" y="595">15</text><text x="732" y="799">605</text><text x="724" y="684">210</text><text x="651" y="882" opacity=".8">405</text><text x="1163" y="899">215</text><text x="945" y="1086">5</text><text x="237" y="644" fill="#555">101</text></g>
                <g fill="#4a78d8" fill-opacity=".3">
                  <path d="M640 345c0-40 25-66 64-66s60 30 60 70c5 25 22 45 22 70 0 40-35 65-72 65-42 0-66-28-66-66 0-25-8-45-8-73z"/>
                  <path d="M664 350c0-28 16-44 40-44s38 16 40 44c4 25 26 40 26 68 0 36-27 54-56 54-32 0-53-22-53-54 0-28 3-42 3-68z"/>
                  <path d="M430 510c0-34 26-58 62-58s60 26 60 60c0 18-2 32 6 42 60-2 90 40 90 82 0 40-30 66-72 66-20 0-32 0-50 10-20-4-36-24-50-10-12 8-30 8-48 6-24-6-42-32-42-62 0-46 40-60 44-86z"/>
                  <path d="M456 516c0-24 14-37 37-37s38 14 38 38c0 30-4 52 20 62 50-14 74 24 74 54 0 34-22 52-54 52-32 0-40-32-62-24-24 24-74 30-92 0-18-32-6-60 18-70 26-20 21-45 21-75z"/>
                </g>
                <g fill="#2d57b5" fill-opacity=".5"><path d="M672 365c4-20 18-30 36-28 20 4 30 18 34 40 14 16 16 46 6 62-16 26-54 26-70 0-12-20-12-50-6-74z"/><path d="M425 605c10-18 50-22 72-8 20 8 22-4 50-10 40-6 66 20 64 52-4 34-46 48-74 22-12-14-22-14-36-8-24 28-60 24-74 6-14-16-12-38-2-54z"/></g>
                <g fill="#1f2c55" fill-opacity=".62"><ellipse cx="712" cy="405" rx="31" ry="43" transform="rotate(-8 712 405)"/><ellipse cx="712" cy="405" rx="17" ry="25" transform="rotate(-8 712 405)"/><path d="M435 620c8-22 60-18 60 6-6 24-30 38-50 34-14-6-14-26-10-40zM542 620c14-20 44-10 52 2 8 16 2 38-14 46-22 2-46-28-38-48z"/></g>
                <circle cx="458" cy="630" r="4" fill="#223"/>
                <g fill="#4a78d8" fill-opacity=".35"><circle cx="773" cy="678" r="63"/><circle cx="773" cy="678" r="44"/><circle cx="900" cy="736" r="63"/><circle cx="900" cy="736" r="40" fill-opacity=".6"/><circle cx="525" cy="762" r="62"/><circle cx="525" cy="762" r="37" fill-opacity=".6"/><circle cx="681" cy="908" r="64"/><circle cx="681" cy="908" r="40" fill-opacity=".55"/></g>
                <circle cx="773" cy="679" r="16" fill="#2e5fb8"/><circle cx="681" cy="908" r="14" fill="#2f6cc9"/>
                <path d="M735 1099h225M987 1099h277" stroke="#3f95f5" stroke-width="9"/>
                <g font-family="Liberation Sans" font-size="24" fill="#444"><text x="866" y="1089" textLength="94" lengthAdjust="spacingAndGlyphs">25 miles</text><text x="1193" y="1089" textLength="68" lengthAdjust="spacingAndGlyphs">50 km</text><text x="733" y="1152" textLength="522" lengthAdjust="spacingAndGlyphs">© 2024 TomTom, © 2024 Microsoft Corporation</text></g>
              </g>
              <path d="M20 73h1312v61H20z" fill="#fff"/>
              <text x="21" y="111" font-size="31" fill="#252423" textLength="231" lengthAdjust="spacingAndGlyphs">12/12 displayed</text>
              <text x="20" y="51" font-family="Roboto" font-size="38" fill="#252423" textLength="539" lengthAdjust="spacingAndGlyphs">Avg Soil Temp (F) by Stn Name</text>
            </svg>
          </div>
        </div>
      </div>
      <div class="w-[49px] bg-white border-l border-[#b3b0ad] flex flex-col items-center">
        <svg class="mt-[13px] ml-1 w-[18px] h-[18px]" viewBox="0 0 18 18" fill="none" stroke="#252423" stroke-width="1.700"><path d="M17 1v16l-7-6H5L1 9l4-3h5z"/></svg>
        <div class="mt-[12px] mr-[2px] [writing-mode:vertical-rl] text-[20.5px] leading-6 font-bold tracking-[0.01em]">Filters</div>
      </div>
    </div>
    <div class="h-[53px] bg-[#f3f2f1] flex">
      <div class="ml-[14px] w-9 pt-[10px] flex flex-col items-center"><svg class="w-[30px] h-[21px]" viewBox="0 0 30 21" fill="none" stroke="#605e5c" stroke-width="1.800"><path d="M1 1h28v15H1zM15 16v4M10 20h10"/></svg><div class="mt-[11px] w-9 h-1 rounded bg-[#117865]"></div></div>
      <svg class="ml-[39px] mt-[7px] w-[20px] h-[30px]" viewBox="0 0 20 30" fill="none" stroke="#605e5c" stroke-width="1.800"><rect x="1" y="1" width="18" height="28" rx="2"/><path d="M8 25.500h4"/></svg>
      <svg class="ml-[31px] mt-5 w-[42px] h-3" viewBox="1 0 42 12" fill="#c8c6c4"><path d="M8 0v12L1 6zM34 0v12l7-6z"/></svg>
      <div class="ml-[9px] w-[113px] bg-white border-l border-[#a19f9d] border-b-[6px] border-b-[#117865] text-center leading-[55px] text-[17px] tracking-[-0.005em] font-semibold">Page 1</div>
      <div class="w-[60px] bg-[#117865] flex items-center justify-center border-l border-white/40 pb-[2px]"><svg class="w-4 h-4" viewBox="0 0 16 16" stroke="#fff" stroke-width="4"><path d="M8 0v16M0 8h16"/></svg></div>
    </div>
  </div>

  <!-- Visualizations pane -->
  <aside class="w-[271px] border-r border-[#dedcda] flex flex-col">
    <div class="h-[58px] flex items-center justify-between pl-[12px] pr-[12px]"><span class="text-[22.5px] font-semibold tracking-[-0.013em]">Visualizations</span><svg class="w-[19px] h-[18px]" viewBox="0 0 19 18" fill="none" stroke="#333" stroke-width="1.500"><path d="M1 0l8 9-8 9M10 0l8 9-8 9"/></svg></div>
    <div class="h-[22px] leading-[22px] pl-[12px] text-[17.5px] font-medium tracking-[-0.012em]">Build visual</div>
    <div class="flex pl-[12px] pt-[6px] h-[72px]">
      <div class="w-12 h-12 bg-[#d2d0ce] rounded-[3px] flex items-center justify-center"><svg class="w-9 h-9" viewBox="0 0 36 36"><path d="M0 1h28" stroke="#252423" stroke-width="1.600"/><path d="M1 8.500h34v10H1zM1 25h34v10H1z" fill="#117865" stroke="#252423" stroke-width="1.800" stroke-dasharray="4 2"/></svg></div>
      <svg class="ml-[56px] mt-[5px] w-[38px] h-[38px]" viewBox="0 0 38 38" fill="none" stroke="#252423" stroke-width="1.700"><path d="M7 37H1V1h17l9 11v3M17 1v11h10"/><path d="M36 14L20 27l4 5 12-17zM20 27c-5 0-4 7-10 8 6 4 14 2 14-3" stroke-linejoin="round"/></svg>
    </div>
    <svg class="w-[270px] h-[14px] -mt-[14px] mb-[16px] shrink-0 translate-y-[2px]" viewBox="0 0 270 14" fill="none" stroke="#8a8886" stroke-width="1.500"><path d="M0 12.500h24L36 1l12 11.500h222"/></svg>
    <div class="mt-[2px] pl-[16px] grid grid-cols-[repeat(6,28px)] gap-[14px] text-[#3b3a39]">
      <svg class="w-7 h-7" viewBox="0 0 28 28" fill="#fff" stroke="#3b3a39" stroke-width="1.500"><path d="M2 4h7v6H2zM2 16h10v6H2z"/><path d="M9 4h9v6H9z" fill="#83bbec" stroke="#1066b5"/><path d="M12 16h12v6H12z" fill="#c8c6c4" stroke="#797775"/><path d="M1 0v27h27" fill="none"/></svg>
      <svg class="w-7 h-7" viewBox="0 0 28 28" fill="#fff" stroke="#3b3a39" stroke-width="1.500"><path d="M6 18h6v9H6zM18 16h6v11h-6z"/><path d="M6 8h6v10H6z" fill="#83bbec" stroke="#1066b5"/><path d="M18 3h6v13h-6z" fill="#c8c6c4" stroke="#797775"/><path d="M1 0v27h27" fill="none"/></svg>
      <svg class="w-7 h-7" viewBox="0 0 28 28" fill="#fff" stroke="#3b3a39" stroke-width="1.500"><path d="M1 1h25v6H1z" fill="#83bbec" stroke="#1066b5"/><path d="M1 7h15v6H1zM1 19h19v6H1z"/><path d="M1 13h11v6H1z" fill="#c8c6c4" stroke="#797775"/><path d="M1 0v27h27" fill="none"/></svg>
      <svg class="w-7 h-7" viewBox="0 0 28 28" fill="#fff" stroke="#3b3a39" stroke-width="1.500"><path d="M3 1h6v26H3z" fill="#83bbec" stroke="#1066b5"/><path d="M9 11h5v16H9zM20 8h6v19h-6z"/><path d="M15 15h5v12h-5z" fill="#c8c6c4" stroke="#797775"/><path d="M1 0v27h27" fill="none"/></svg>
      <svg class="w-7 h-7" viewBox="0 0 28 28" fill="#fff" stroke="#3b3a39" stroke-width="1.500"><path d="M2 4h5v6H2zM2 16h14v6H2z"/><path d="M7 4h17v6H7z" fill="#83bbec" stroke="#1066b5"/><path d="M16 16h8v6h-8z" fill="#c8c6c4" stroke="#797775"/><path d="M1 0v27h27" fill="none"/></svg>
      <svg class="w-7 h-7" viewBox="0 0 28 28" fill="#fff" stroke="#3b3a39" stroke-width="1.500"><path d="M6 21h6v6H6zM18 12h6v15h-6z"/><path d="M6 4h6v17H6z" fill="#83bbec" stroke="#1066b5"/><path d="M18 4h6v8h-6z" fill="#c8c6c4" stroke="#797775"/><path d="M1 0v27h27" fill="none"/></svg>

      <svg class="w-7 h-7" viewBox="0 0 28 28" fill="none" stroke="#3b3a39" stroke-width="1.500"><path d="M2 22L17 5l10 9" stroke="#1f87cf"/><path d="M2 16l9-9 7 7 9-8"/><path d="M1 0v27h27"/></svg>
      <svg class="w-7 h-7" viewBox="0 0 28 28" fill="#fff" stroke="#3b3a39" stroke-width="1.500"><path d="M12 20l9-18 6 16v9z" fill="#c8c6c4" stroke="#797775"/><path d="M1 16l9-14 8 14-7 8z"/><path d="M1 18l7 6 9-12 10 15H1z" fill="#83bbec" stroke="#1066b5"/></svg>
      <svg class="w-7 h-7" viewBox="0 0 28 28" fill="none" stroke="#1066b5" stroke-width="1.500"><path d="M2 5l8 7L19 3l8 6v12l-9-8-8 10-8-9z" fill="#83bbec" stroke="none"/><path d="M2 5l8 7L19 3l9 6M2 14l8 9 8-10 10 8"/><path d="M1 0v27h27" stroke="#3b3a39"/></svg>
      <svg class="w-7 h-7" viewBox="0 0 28 28" fill="#83bbec" stroke="#1066b5" stroke-width="1.500"><path d="M1 4h27v16l-8-7-10 9-9-9z"/><path d="M1 3v24h27" fill="none" stroke="#3b3a39"/></svg>
      <svg class="w-7 h-7" viewBox="0 0 28 28" fill="#fff" stroke="#3b3a39" stroke-width="1.500"><path d="M6 20h6v7H6zM18 10h6v17h-6z"/><path d="M6 3h6v17H6z" fill="#83bbec" stroke="#1066b5"/><path d="M18 4h6v7h-6z" fill="#c8c6c4" stroke="#797775"/><path d="M2 24l7-8 7 5 11-9M1 0v27h27" fill="none"/></svg>
      <svg class="w-7 h-7" viewBox="0 0 28 28" fill="#fff" stroke="#3b3a39" stroke-width="1.500"><path d="M12 2h6v25h-6z"/><path d="M6 13h6v14H6z" fill="#83bbec" stroke="#1066b5"/><path d="M18 8h6v19h-6z" fill="#c8c6c4" stroke="#797775"/><path d="M2 24l7-8 7 6 11-11M1 0v27h27" fill="none"/></svg>

      <svg class="w-7 h-7" viewBox="0 0 28 28" fill="none"><path d="M3 15h23v9H3z" fill="#f7b765" stroke="#dd7312" stroke-width="1.500"/><path d="M2 5c5 6 9 4 13 1s6-2 11-2v6c-6 0-7 10-12 10S8 14 3 13z" fill="#c8c6c4" stroke="#797775" stroke-width="1.500"/><path d="M3 10c6 0 7 11 11 11s6-10 12-10" stroke="#1066b5" stroke-width="5"/><path d="M3 10c6 0 7 11 11 11s6-10 12-10" stroke="#83bbec" stroke-width="2.500"/><path d="M1 0v27h27" stroke="#3b3a39" stroke-width="1.500"/></svg>
      <svg class="w-7 h-7" viewBox="0 0 28 28" fill="#fff" stroke="#3b3a39" stroke-width="1.500"><path d="M4 9h5v18H4zM20 2h5v25h-5z"/><path d="M11 8h4v8h-4z" fill="#c8c6c4" stroke="#797775"/><path d="M16 2h3v14h-3z" fill="#83bbec" stroke="#1066b5"/><path d="M1 0v27h27" fill="none"/></svg>
      <svg class="w-7 h-7" viewBox="0 0 28 28" fill="#83bbec" stroke="#1066b5" stroke-width="1.500"><path d="M1 2h26v8H1zM4.500 10h19v8h-19zM9 18h10v7H9z"/></svg>
      <svg class="w-7 h-7" viewBox="0 0 28 28" fill="none" stroke="#3b3a39" stroke-width="1.500"><path d="M1 0v27h27"/><g stroke="none"><path d="M20 2h5v5h-5zM5 18h5v5H5z" fill="#3b3a39"/><path d="M5 6h5v5H5zM12 11h5v5h-5zM20 17h5v5h-5z" fill="#83bbec"/></g></svg>
      <svg class="w-7 h-7" viewBox="0 0 28 28" stroke-width="1.500"><circle cx="14" cy="14" r="13" fill="#fff" stroke="#3b3a39"/><path d="M14 1a13 13 0 0 1 9 22l-9-9z" fill="#83bbec" stroke="#1066b5"/></svg>
      <svg class="w-7 h-7" viewBox="0 0 28 28" fill="none"><circle cx="14" cy="14" r="10" stroke="#1066b5" stroke-width="7"/><circle cx="14" cy="14" r="10" stroke="#83bbec" stroke-width="4.500"/><path d="M14 1A13 13 0 0 0 1 14h6a7 7 0 0 1 7-7z" fill="#fff" stroke="#797775" stroke-width="1.500"/></svg>

      <svg class="w-7 h-7" viewBox="0 0 28 28" fill="#fff" stroke="#3b3a39" stroke-width="1.500"><path d="M1 1h26v26H1zM13 10h14M19 10v17M19 18h8M13 18h6"/><path d="M1 1h12v26H1zM1 15h12" fill="#83bbec" stroke="#1066b5"/></svg>
      <svg class="w-7 h-7" viewBox="0 0 28 28" fill="none" stroke="#3b3a39" stroke-width="1.500"><circle cx="16" cy="12" r="8.500" fill="#fff"/><path d="M11 6l4-2 1 4-4 5-3-2zM18 6l4 2-1 6-3-3zM12 17l5-3 3 3-4 3z" fill="#2f9e4f" stroke="none"/><path d="M14 1C6 1 2 7 4 14s10 11 18 7M14 23v4M5 27h20"/></svg>
      <svg class="w-7 h-7" viewBox="0 0 28 28" fill="#83bbec" stroke="#1066b5" stroke-width="1.400"><path d="M13 5l4-2h10v12l-7 2-8-4z" fill="#c8c6c4" stroke="#797775"/><path d="M1 13h11l2 12-4-1-3-4-5-2z" fill="#c8c6c4" stroke="#605e5c"/><path d="M1 3h11l-2 5 2 5H2l2-5zM13 14l14-1-1 7-5 2-1 3-3-3-4 3z"/></svg>
      <svg class="w-7 h-7 overflow-visible" viewBox="0 0 28 28"><path d="M17-1L1 26l14-7z" fill="#3a9cc8"/><path d="M17-1l8 30-10-10z" fill="#65bfe3"/><path d="M15 19l10 10-3-14z" fill="#1275c9"/></svg>
      <svg class="w-7 h-7" viewBox="0 0 28 28" fill="#fff" stroke="#3b3a39" stroke-width="1.500"><path d="M1 19C1 11 7 6 14 6s13 5 13 13h-6c0-4-3-7-7-7s-7 3-7 7z"/><path d="M9 7c9-4 18 3 18 12h-6c0-4-3-7-8-7z" fill="#83bbec" stroke="#1066b5"/><path d="M12 19l8-8-4 9z" fill="#3b3a39" stroke-width="1"/></svg>
      <svg class="w-7 h-7" viewBox="0 0 28 28"><path d="M1 4h26v20H1z" fill="#fff" stroke="#3b3a39" stroke-width="1.500"/><text x="3" y="18" font-size="12" fill="#1f87cf" textLength="22" lengthAdjust="spacingAndGlyphs">123</text><path d="M4 20.500h20" stroke="#797775"/></svg>

      <svg class="w-7 h-7" viewBox="0 0 28 28" fill="none" stroke-width="1.500"><path d="M1 1h26v26H1z" fill="#fff" stroke="#3b3a39"/><path d="M6 5v18M9 11.500h9M9 20.500h9" stroke="#797775"/><path d="M9 7.500h15M9 16.500h15" stroke="#1066b5" stroke-width="2.400"/></svg>
      <svg class="w-7 h-7" viewBox="0 0 28 28" fill="none" stroke-width="1.300"><path d="M1 3h26v21H1z" fill="#fff" stroke="#3b3a39" stroke-width="1.500"/><path d="M4 15l5-8 4 8z" fill="#8fd39b" stroke="#2f9e4f"/><path d="M15 7h9l-4.500 8z" fill="#f6a3a3" stroke="#d92c2c"/><path d="M4 19.500h20" stroke="#797775"/></svg>
      <svg class="w-7 h-7" viewBox="0 0 28 28" fill="#fff" stroke="#3b3a39" stroke-width="1.500"><path d="M27 12V1H1v26h15"/><path d="M2 2h24v4H2z" fill="#c8c6c4" stroke="#797775"/><path d="M6 11h4v4H6zM6 19h4v4H6z" fill="#c8c6c4" stroke="#797775"/><path d="M14 15h14l-5 6v8h-4v-8z"/></svg>
      <svg class="w-7 h-7" viewBox="0 0 28 28" fill="#fff" stroke="#797775" stroke-width="1.500"><path d="M1 1h26v26H1z" stroke="#3b3a39"/><path d="M2 2h24v4H2z" fill="#c8c6c4" stroke="none"/><path d="M1 6h26M1 13h26M1 20h26M10 6v21M18.500 6v21"/></svg>
      <svg class="w-7 h-7" viewBox="0 0 28 28" fill="#fff" stroke="#797775" stroke-width="1.500"><path d="M1 1h26v26H1z" stroke="#3b3a39"/><path d="M2 2h24v4H2z" fill="#c8c6c4" stroke="none"/><path d="M18 6h9v21H1v-7h17z" fill="#83bbec" stroke="#1066b5"/><path d="M1 6h26M1 13h26M10 6v21M18.500 20v7"/></svg>
      <div class="w-7 h-7 pl-[5px] text-[23px] leading-7 font-bold text-[#1f87cf]">R</div>

      <div class="w-7 h-7 -ml-px text-[23px] leading-[25px] font-bold tracking-[-0.03em] text-[#1f87cf]">Py</div>
      <svg class="w-7 h-7" viewBox="0 0 28 28" fill="none" stroke-width="1.500"><path d="M1 13h13M1 19h7" stroke="#797775"/><circle cx="16" cy="13" r="2" stroke="#797775"/><circle cx="10" cy="19" r="2" stroke="#797775"/><path d="M1 5h18" stroke="#1f87cf" stroke-width="2"/><circle cx="22" cy="5" r="3.200" fill="#83bbec" stroke="#1066b5"/><path d="M1 0v27h27" stroke="#3b3a39"/></svg>
      <svg class="w-7 h-7" viewBox="0 0 28 28" fill="#83bbec" stroke="#1066b5" stroke-width="1.500"><path d="M10 13h7M14 4v20M14 4h3M14 23h3" stroke="#3b3a39" fill="none"/><path d="M1 10h9v6H1zM17 1h10v6H17zM17 10h10v6H17zM17 19h10v6H17z"/></svg>
      <svg class="w-7 h-7" viewBox="0 0 28 28" fill="#fff" stroke="#1066b5" stroke-width="1.500"><path d="M1 2h26v18H14l-8 6v-6H1z"/></svg>
      <svg class="w-7 h-7" viewBox="0 0 28 28" fill="#fff" stroke="#3b3a39" stroke-width="1.500"><path d="M4 7V1h14l6 7v19H4V14M17 1v7h7"/><circle cx="5" cy="11" r="2.500" fill="#83bbec" stroke="#1066b5"/><path d="M10 13h10M8 18h8" stroke="#1f87cf" stroke-width="2"/></svg>
      <svg class="w-7 h-7" viewBox="0 0 28 28" fill="#fff" stroke="#3b3a39" stroke-width="1.600"><path d="M7 3H1c0 6 1 9 6 9M21 3h6c0 6-1 9-6 9" fill="none"/><path d="M7 3h14c0 7-1 12-5 15v5h-4v-5C8 15 7 10 7 3z"/><path d="M7 1h14v3H7zM7 23h14v3H7z" fill="#83bbec" stroke="#1066b5"/></svg>

      <svg class="w-7 h-7 overflow-visible" viewBox="0 0 28 28" fill="#fff" stroke="#3b3a39" stroke-width="1.700"><path d="M3-1h14l7 8v21H3zM16-1v8h8"/><path d="M8 16v9M13 19v6M19 13v12" stroke-width="3.500"/></svg>
      <svg class="w-7 h-7 overflow-visible" viewBox="0 0 28 28"><path d="M14 4h13v20H1v-8" fill="#fff" stroke="#3b3a39" stroke-width="1.700"/><text x="6" y="18" font-size="12" fill="#1f87cf" textLength="19" lengthAdjust="spacingAndGlyphs">123</text><path d="M4 21h20" stroke="#797775"/><path d="M5-1h8L9 5h5L1 17l3-8H0z" fill="#fcd88c" stroke="#dd7312" stroke-width="1.400"/></svg>
      <svg class="w-7 h-7 overflow-visible" viewBox="0 0 28 28" fill="#fff" stroke="#797775" stroke-width="1.500"><path d="M15 2h10v10H15zM1 15h11v11H1z"/><path d="M7 9h6v4H7z" fill="#1066b5" stroke="none"/><path d="M14 15h14l-5 6v7h-4v-7z" stroke="#3b3a39"/><path d="M5-1h8L9 5h5L1 17l3-8H0z" fill="#fcd88c" stroke="#dd7312" stroke-width="1.400"/></svg>
      <svg class="w-7 h-7 overflow-visible" viewBox="0 0 28 28"><path d="M9 1h18v26H1V17z" fill="#83bbec" stroke="#1066b5" stroke-width="1.500"/><path d="M3 17l6-3 2-8 8-1-2 6-4 4-1 5-4 5H3z" fill="#fff"/><path d="M0-1h9v10L4.500 16 0 9z" fill="#e06c00"/><circle cx="4.500" cy="5" r="2" fill="#fff"/><circle cx="24" cy="24" r="6" fill="#f3f2f1"/><circle cx="23" cy="24" r="4" fill="#e06c00"/><circle cx="27" cy="17" r="2.500" fill="#e06c00"/></svg>
      <svg class="w-7 h-7" viewBox="0 0 28 28" fill="#fff" stroke="#88379c" stroke-width="1.500"><path d="M1 14L10 2h8l9 12-9 12h-8z"/><path d="M11 2l10 12-10 12M17 2l-6 6 10 12-4 6M21 8L11 20" fill="none"/></svg>
      <svg class="w-7 h-7" viewBox="0 0 28 28" fill="#fff" stroke="#1084d9" stroke-width="1.500"><path d="M1 2h17l9 11-9 11H1l9-11z"/><path d="M1 24L19 3M10 24L23 8" fill="none"/></svg>
      <div class="w-7 h-5 text-[22px] leading-[19px] tracking-[.12em]">···</div>
    </div>
    <div class="ml-[9px] w-[252px] mt-[19px] border-t border-dashed border-[#d8d6d4]"></div>
    <div class="pl-[16px] pt-[10px] pb-[13px] flex gap-[14px]">
      <svg class="w-7 h-7" viewBox="-1 0 28 28"><path d="M3 4C10-1 17 0 21 3c6 5 7 14 3 19s-15 6-19 1S-1 8 3 4z" fill="#a9c8f8"/><path d="M6 8c4-6 13-5 16 0s0 13-6 14S3 15 6 8z" fill="#5685d3"/><path d="M9 12c4-3 9-2 10 2s-2 5-5 5-7-3-5-7z" fill="#20437e"/></svg>
      <svg class="w-7 h-7" viewBox="0 0 28 28" fill="none"><path d="M15 2a12 12 0 0 1 12 11" stroke="#d4694f" stroke-width="4"/><path d="M15 6a8 8 0 0 1 8 8" stroke="#447fbf" stroke-width="7"/><path d="M22 15c0 5-3 8-7 8" stroke="#ebc182" stroke-width="10"/><path d="M3 14c0 7 5 12 11 12" stroke="#d4694f" stroke-width="4"/><path d="M7 10c-1 6 2 11 7 11" stroke="#447fbf" stroke-width="7"/></svg>
    </div>
    <div class="relative flex-1 border-t border-[#dedcda] pt-[13px] pl-[18px] text-[17.3px] leading-6 tracking-[-0.012em] text-[#3b3a39]">
      <div>Values</div>
      <div class="-ml-[12px] mt-[8px] w-[255px] h-[42px] bg-white border border-dashed border-[#c8c6c4] rounded-[3px] pl-[15px] leading-[38px]">Add data fields here</div>
      <div class="mt-[15px] font-semibold text-[#4f4d4b]">Drill through</div>
      <div class="mt-[14px] flex items-center">Cross-report<div class="ml-auto mr-[33px] w-12 h-6 rounded-full border border-[#8a8886] bg-white flex items-center text-[13.5px] tracking-[-0.01em]"><span class="ml-[6px] mr-[3px] w-3 h-3 rounded-full bg-[#605e5c]"></span>Off</div></div>
      <div class="absolute right-0 top-[3px] w-[9px] h-[100px] rounded-full bg-[#d2d0ce]"></div>
    </div>
  </aside>

  <!-- Data pane -->
  <aside class="w-[270px] flex flex-col">
    <div class="h-[58px] flex items-center justify-between pl-[12px] pr-[12px]"><span class="text-[22.5px] font-semibold tracking-[-0.03em]">Data</span><svg class="w-[19px] h-[18px]" viewBox="0 0 19 18" fill="none" stroke="#333" stroke-width="1.500"><path d="M1 0l8 9-8 9M10 0l8 9-8 9"/></svg></div>
    <div class="ml-[6px] mt-[10px] w-[258px] h-9 bg-white border border-[#d2d0ce] border-b-[#605e5c] rounded-[5px] flex items-center">
      <svg class="ml-[18px] w-[21px] h-[21px]" viewBox="0 0 21 21" fill="none" stroke="#605e5c" stroke-width="1.400"><circle cx="8.500" cy="8.500" r="7.500"/><path d="M14 14l6.500 6.500"/></svg>
      <span class="ml-[11px] mt-[2px] text-[19.500px] tracking-[0] text-[#757371]">Search</span>
    </div>
    <div class="mt-[20px] pl-[24px] flex items-center">
      <svg class="w-[10px] h-[17px]" viewBox="0 0 10 17" fill="none" stroke="#555" stroke-width="1.400"><path d="M1 1l8 7.500L1 16"/></svg>
      <svg class="ml-[10px] w-[18px] h-[18px]" viewBox="0 0 18 18" fill="none" stroke="#252423" stroke-width="1.600"><rect x="1" y="1" width="16" height="16" rx="3"/><path d="M1 6h16M1 12h16M6 1v16M12 1v16"/></svg>
      <span class="ml-[9px] text-[17px] tracking-[-0.008em]">jan21_dec23</span>
    </div>
  </aside>
</main>

<!-- Status bar -->
<footer class="h-[36px] shrink-0 border-t border-[#dedcda] border-b-2 border-b-black flex items-center text-[17.5px] tracking-[-0.012em] text-[#3b3a39]">
  <span class="ml-[6px] mt-[3px]">Page 1 of 1</span>
  <svg class="ml-auto w-[190px] h-5" viewBox="0 0 190 20" fill="none" stroke="#605e5c"><path d="M5 11.500h6" stroke-width="2"/><path d="M19 10.500h150" stroke-width="1.500"/><path d="M61.500 2v17" stroke-width="6"/><path d="M94 7v7" stroke-width="2"/><path d="M177 10.500h12M183 5v11" stroke-width="2"/></svg>
  <span class="ml-[18px] w-[35px] tracking-[-0.05em] text-[#605e5c]">62%</span>
  <svg class="ml-[29px] mr-[27px] w-6 h-[18px]" viewBox="0 0 24 18" fill="none" stroke="#605e5c" stroke-width="1.600"><path d="M1 1h22v16H1z"/><path d="M4 7V4h4M16 4h4v3M20 11v3h-4M8 14H4v-3"/></svg>
</footer>

<!-- Taskbar -->
<div class="h-[72px] shrink-0 border-t-2 border-[#b4b7b3] flex bg-[linear-gradient(90deg,#dfe3c9_0%,#e2e4d3_30%,#dfe3db_42%,#d2dde8_52%,#d5dce7_70%,#d9dbe5_85%,#d9dde6_100%)] text-[#1a1a1a]">
  <div class="w-[472px] pl-[30px] pt-[8px]">
    <svg class="w-[50px] h-[44px]" viewBox="0 0 50 44"><path d="M4 30c10 4 22-2 27-13 6 14-2 21-12 21-8 0-13-3-15-8z" fill="#f08c28"/><path d="M5 21c-6-1-6-8 0-8 0-6 9-7 10-1 6 0 6 9 1 9z" fill="#9fc0f2"/><path d="M19 38c-5-1-5-6 0-7 1-6 9-6 10 0 8 0 8 7 3 7z" fill="#a6c4f5"/><rect x="13" y="0" width="34" height="24" rx="12" fill="#fbfbf8"/><text x="18.500" y="18" font-size="16" fill="#222" textLength="24" lengthAdjust="spacingAndGlyphs">56°</text></svg>
  </div>
  <div class="flex">
    <div class="w-[66px] mr-[2px] flex justify-center pt-[17px]"><svg class="w-[35px] h-[35px]" viewBox="0 0 35 35"><defs><linearGradient id="win" x1="0" y1="0" x2="1" y2="1"><stop offset="0" stop-color="#4cc9f8"/><stop offset="1" stop-color="#0069c8"/></linearGradient></defs><path d="M0 0h17v17H0zM18 0h17v17H18zM0 18h17v17H0zM18 18h17v17H18z" fill="url(#win)"/></svg></div>
    <div class="w-[66px] flex justify-center pt-[17px]"><svg class="w-[34px] h-[35px]" viewBox="0 0 34 35" fill="none" stroke="#222"><circle cx="15" cy="14" r="12.500" stroke-width="2.600"/><path d="M24 23.500l8 9" stroke-width="3.800" stroke-linecap="round"/></svg></div>
    <div class="w-[66px] flex justify-center pt-[17px]"><svg class="w-[36px] h-[35px]" viewBox="0 0 36 35"><rect x="0" y="9" width="27" height="25" rx="1" fill="#242424"/><rect x="9" y="0" width="27" height="24" rx="1" fill="#f8f8f8"/><path d="M9 9h18v15H9z" fill="#bdbdbd"/></svg></div>
    <div class="w-[66px] flex justify-center pt-[17px]"><svg class="w-[36px] h-[35px]" viewBox="0 0 36 35"><circle cx="19" cy="6" r="5.500" fill="#7b83eb"/><circle cx="30" cy="7.500" r="4" fill="#5059c9"/><path d="M25 13h11v11c0 7-9 7-11 2z" fill="#5059c9"/><path d="M10 13h17v11c0 12-17 12-17 0z" fill="#7b83eb"/><rect x="0" y="8" width="18" height="18" rx="1.500" fill="#4b53bc"/><path d="M5 13h8M9 13v9" stroke="#fff" stroke-width="2.200"/></svg></div>
    <div class="w-[66px] flex flex-col items-center pt-[18px]"><svg class="w-[36px] h-[34px]" viewBox="0 0 36 34"><path d="M0 2c0-1 1-2 2-2h10l3 4h19c1 0 2 1 2 2v8H0z" fill="#dd9b08"/><path d="M0 6h36v26c0 1-1 2-2 2H2c-1 0-2-1-2-2z" fill="#fbd14b"/><path d="M6 34V26c0-2 1-3 3-3h18c2 0 3 1 3 3v8z" fill="#1384d8"/><path d="M11 28h14" stroke="#0b4f9c" stroke-width="2"/></svg><i class="mt-[6px] w-[9px] h-[5px] rounded-full bg-[#7c8186]"></i></div>
    <div class="w-[66px] flex flex-col items-center pt-[16px]"><svg class="w-[36px] h-[36px]" viewBox="0 0 36 36"><defs><linearGradient id="edge" x1="0" y1="0" x2="1" y2=".4"><stop offset="0" stop-color="#1f8fd9"/><stop offset=".6" stop-color="#35c1d6"/><stop offset="1" stop-color="#5fe06b"/></linearGradient></defs><circle cx="18" cy="18" r="17.500" fill="#0f5fb0"/><path d="M.500 18C1 8 8 .500 18 .500S36 9 35.500 16c-.500 7-8 9-13 7 2-8-3-13-10-12S1 17 .500 18z" fill="url(#edge)"/><path d="M15 20c0-5 8-7 8-1 0 4 3 8 12 6-3 5-16 4-20-5z" fill="#d3dde8"/><rect x="0" y="25" width="18" height="11" rx="1" fill="#b5630e"/><path d="M5 25v-3h8v3" fill="none" stroke="#8a4a08" stroke-width="1.500"/></svg><i class="mt-[6px] w-[9px] h-[5px] rounded-full bg-[#7c8186]"></i></div>
    <div class="w-[66px] flex justify-center pt-[17px]"><svg class="w-[36px] h-[35px]" viewBox="0 0 36 35"><path d="M11 5V1h14v4" fill="none" stroke="#28b4ee" stroke-width="2.500"/><path d="M0 4h36v27c0 2-2 4-4 4H4c-2 0-4-2-4-4z" fill="#184f8c"/><path d="M10 12h7v7h-7z" fill="#f25022"/><path d="M18.500 12h7v7h-7z" fill="#7fba00"/><path d="M10 20.500h7v7h-7z" fill="#00a4ef"/><path d="M18.500 20.500h7v7h-7z" fill="#ffb900"/></svg></div>
    <div class="w-[66px] flex flex-col items-center pt-[16px]"><svg class="w-[36px] h-[36px]" viewBox="0 0 36 36"><circle cx="18" cy="18" r="17.500" fill="#fbc116"/><path d="M2.800 9.300A17.500 17.500 0 0 1 33.500 9.500H18z" fill="#e33b2e"/><path d="M2.800 9.300L12 24l6 11.500A17.500 17.500 0 0 1 2.800 9.300z" fill="#229342"/><path d="M12 24h10L17 35.500C11 35.500 6 32 3 27z" fill="#229342"/><circle cx="18" cy="18" r="8.700" fill="#fff"/><circle cx="18" cy="18" r="6.800" fill="#3b7cf0"/></svg><i class="mt-[6px] w-[9px] h-[5px] rounded-full bg-[#7c8186]"></i></div>
    <div class="w-[66px] flex justify-center pt-[16px]"><svg class="w-[31px] h-[36px]" viewBox="0 0 31 36"><path d="M8 0h15l3 3 3 1-1 4 3 4c-1 12-6 20-15.500 24C6 32 1 24 0 12l3-4-1-4 3-1z" fill="#fb4a24"/><path d="M6 7l5-1h9l5 1 2 4-4 5 1 4-5 4-3.500 6-3.500-6-5-4 1-4-4-5z" fill="#fff"/><path d="M9 12l5 1-2 3zM22 12l-5 1 2 3zM15.500 15l2 6-2 2-2-2zM12 23h7l-3.500 3z" fill="#fb4a24"/></svg></div>
    <div class="w-[66px] flex flex-col items-center pt-[16px] relative"><svg class="w-[36px] h-[36px]" viewBox="0 0 36 36"><path d="M2 34l2.500-9A15.500 15.500 0 1 1 11 31.500z" fill="#eaf3ee" stroke="#1e8a55" stroke-width="3.200"/><path d="M10 11c2-3 4-1 5 3 0 2-2 2 0 4s3 4 5 4 2-3 4-1c4 2 3 4 1 5-4 2-9 0-12-4-3-3-5-7-3-11z" fill="#1e8a55"/></svg><i class="mt-[6px] w-[9px] h-[5px] rounded-full bg-[#7c8186]"></i><b class="absolute left-[34px] top-[8px] w-6 h-6 rounded-full bg-[#0b72d2] text-white text-center text-[15px] leading-6 font-normal">3</b></div>
    <div class="w-[66px] flex flex-col items-center pt-[16px]"><svg class="w-[30px] h-[36px]" viewBox="0 0 30 36"><rect x="1" y="3" width="28" height="30" rx="2" fill="#46b7d8"/><path d="M1 31h28v3c0 1-1 2-2 2H3c-1 0-2-1-2-2z" fill="#b4631c"/><path d="M1 30h28v2H1z" fill="#fff"/><path d="M4 0v5M9 0v5M14.500 0v5M20 0v5M25 0v5" stroke="#17647f" stroke-width="2.400"/><path d="M6 11h18M6 17h18M6 23h18" stroke="#14627e" stroke-width="2"/></svg><i class="mt-[6px] w-[9px] h-[5px] rounded-full bg-[#7c8186]"></i></div>
    <div class="w-[66px] flex flex-col items-center pt-[16px] relative"><svg class="w-[36px] h-[36px]" viewBox="0 0 36 36"><path d="M8 3h24v22H8z" fill="#1a7fd6"/><path d="M8 12l28 4v17c0 1-1 2-2 2H10c-1 0-2-1-2-2z" fill="#42a5f0"/><path d="M8 35l28-18v16c0 1-1 2-2 2z" fill="#1d88de"/><rect x="0" y="10" width="19" height="19" rx="2" fill="#0f66bd"/><ellipse cx="9.500" cy="19.500" rx="4" ry="4.500" fill="none" stroke="#fff" stroke-width="2.300"/></svg><i class="mt-[6px] w-[9px] h-[5px] rounded-full bg-[#7c8186]"></i><svg class="absolute left-[34px] top-[8px] w-6 h-6" viewBox="0 0 24 24" fill="none"><circle cx="12" cy="12" r="12" fill="#0b62b8"/><path d="M4.500 7h15v10h-15zM4.500 8l7.500 5 7.500-5" stroke="#fff" stroke-width="1.700"/></svg></div>
    <div class="w-[66px] flex flex-col items-center pt-[16px]"><svg class="w-[36px] h-[36px]" viewBox="0 0 36 36"><path d="M0 0h36v36H0z" fill="#0a6fd0"/><path d="M20 0h12v36H20z" fill="#d9960c"/><path d="M12 9h12v27H12z" fill="#f5c52c"/><path d="M4 18h12v18H4z" fill="#fbe06e"/></svg><i class="mt-[6px] w-[9px] h-[5px] rounded-full bg-[#7c8186]"></i></div>
    <div class="w-[66px] flex flex-col items-center pt-[16px]"><svg class="w-[36px] h-[36px]" viewBox="0 0 36 36"><path d="M8 2h28v32H8z" fill="#21a366"/><path d="M22 2h14v16H22z" fill="#33c481"/><path d="M8 10h14v8H8z" fill="#107c41"/><path d="M8 18h28v16H8z" fill="#185c37"/><path d="M22 18h14v8H22z" fill="#107c41"/><rect x="0" y="9" width="18" height="18" rx="1.500" fill="#107c41"/><path d="M5.500 13l7 10M12.500 13l-7 10" stroke="#fff" stroke-width="2.300"/></svg><i class="mt-[6px] w-[9px] h-[5px] rounded-full bg-[#7c8186]"></i></div>
  </div>
  <div class="ml-auto flex items-center pb-1">
    <svg class="w-4 h-[9px]" viewBox="0 0 16 9" fill="none" stroke="#222" stroke-width="1.800"><path d="M1 8l7-7 7 7"/></svg>
    <svg class="ml-[26px] w-[26px] h-[22px]" viewBox="0 0 26 22" fill="none" stroke="#222" stroke-width="1.600"><path d="M7 18c-7 0-7-9-1-9C7 1 18 1 19 8c7 0 8 10 1 10z" fill="#b9babd"/><path d="M3 1l21 20"/></svg>
    <svg class="ml-[23px] w-[26px] h-[26px]" viewBox="0 0 26 26" fill="none" stroke="#222" stroke-width="1.500"><path d="M2 11C3 1 18-1 22 8M23 2v7h-7M1 16c1 4 4 8 9 9M2 23v-7h6"/><circle cx="18" cy="19" r="6.500" fill="#f7950a" stroke="none"/></svg>
    <svg class="ml-[23px] w-6 h-[18px]" viewBox="0 0 24 18" fill="none" stroke="#222" stroke-width="1.600"><path d="M1 7c6-7 16-7 22 0M4.500 10.500c4-5 11-5 15 0M8 14c2-3 6-3 8 0"/><circle cx="12" cy="16" r="1.600" fill="#222"/></svg>
    <svg class="ml-[11px] w-6 h-[20px]" viewBox="0 0 24 20" fill="none" stroke="#222" stroke-width="1.500"><path d="M1 7v6h4l5 5V2L5 7zM14 7c2 2 2 4 0 6M17 4c4 4 4 8 0 12M20 1.500c5 5 5 12 0 17"/></svg>
    <svg class="ml-[12px] w-6 h-4" viewBox="0 0 24 16" fill="none" stroke="#222" stroke-width="1.600"><rect x="1" y="1" width="19" height="14" rx="3"/><rect x="4" y="4" width="8" height="8" fill="#222" stroke="none"/><path d="M22 5v6" stroke-width="2.500"/></svg>
    <div class="ml-[25px] w-[94px] text-right text-[17px] leading-6 tracking-[-0.015em]">6:34 PM<br>12/12/2024</div>
    <svg class="ml-[13px] mr-[30px] w-[22px] h-6" viewBox="0 0 22 24"><path d="M3 17V9c0-5 3-8 8-8v4h6v12l2 3H1z" fill="#1a1a1a"/><path d="M7 22h6l-3 2z" fill="#1a1a1a"/><path d="M14 2h6l-6 6h6" fill="none" stroke="#1a1a1a" stroke-width="1.500"/><path d="M7 9h5l-5 6h5" fill="none" stroke="#fff" stroke-width="1.500"/></svg>
  </div>
</div>

<script>
const ns = 'http://www.w3.org/2000/svg';
let seed = 11;
const rnd = () => (seed = (seed * 16807) % 2147483647) / 2147483647;
const lerp = (pts, x, k) => {
  for (let i = 1; i < pts.length; i++) if (x <= pts[i][0]) {
    const a = pts[i - 1], b = pts[i], t = (x - a[0]) / (b[0] - a[0]);
    return a[k] + t * (b[k] - a[k]);
  }
  return pts[pts.length - 1][k];
};
const el = (parent, tag, attrs) => {
  const e = document.createElementNS(ns, tag);
  for (const k in attrs) e.setAttribute(k, attrs[k]);
  parent.appendChild(e);
  return e;
};

/* ETo against solar radiation: noisy line between a lower and an upper bound */
const env = [[766,459,471],[775,455,470],[782,453,468],[790,451,464],[800,448,461],[812,443,456],[822,438,453],[831,432,445],[843,427,440],[852,421,437],[865,416,432],[873,410,426],[885,404,420],[897,398,414],[908,391,406],[920,383,399],[931,372,389],[936,364,385],[940,360,382],[946,360,378]];
let d = 'M749 443L752 471L757 471L757.500 438L758.500 471L760 440L761 471L764 460L766 471';
for (let x = 766.6; x < 946; x += 1) {
  const lo = lerp(env, x, 2), hi = lerp(env, x, 1);
  d += `L${x.toFixed(1)} ${(hi + rnd() * 5 - (rnd() > .93 && x < 925 ? 5 : 0)).toFixed(1)}L${(x + .5).toFixed(1)} ${(lo - rnd() * 5 + (rnd() > .94 ? 5 : 0)).toFixed(1)}`;
  if (Math.abs(x - 773) < .5) d += 'L773 443L774 469';
}
d += 'L946.500 361L951 399L953 387L962 425';
document.getElementById('eto').setAttribute('d', d);

/* Precipitation columns */
let p = '';
for (let x = 1070.500; x < 1177; x += 1.5) p += `M${x} 473V${(472.5 - rnd() * rnd() * (x < 1118 ? 6 : 2.500) - (x < 1118 ? 1 : 0)).toFixed(1)}`;
for (const [x, y] of [[1102,465],[1117.500,460],[1121.500,460],[1123.500,455],[1128.500,462],[1142.500,448],[1151,466],[1164.500,465],[1174.500,464],[1176,468]]) p += `M${x} 473V${y}`;
document.getElementById('precip').setAttribute('d', p);

/* Monthly columns: top edge of each of the five series */
const names = ['January','February','March','April','May','June','July','August','Septem...','October','Novem...','Decemb...'];
const lens = [112,130,98,72,68,72,58,108,140,122,138,150];
const tops = [[319,314,322,489,480],[317,343,319,487,484],[310,301,308,487,475],[287,310,284,487,469],[277,291,267,487,462],[254,303,252,488,455],[230,325,234,489,451],[231,325,233,490,451],[244,303,243,491,449],[271,315,266,491,463],[300,337,296,490,478],[321,274,315,492,475]];
const colors = ['#118dff','#12239e','#e66c37','#6b007b','#e044a7'];
const mg = document.getElementById('months');
tops.forEach((row, i) => {
  row.forEach((y, j) => el(mg, 'rect', { x: 211 + 67.9 * i + 11 * j, y, width: 11, height: 505 - y, fill: colors[j] }));
  const t = el(mg, 'text', { transform: `translate(${221 + 67.9 * i} 542) rotate(-35)`, 'text-anchor': 'end', textLength: lens[i], lengthAdjust: 'spacingAndGlyphs' });
  t.textContent = names[i];
});

/* Scatter points */
const dots = document.getElementById('dots');
const dot = (cx, cy) => el(dots, 'circle', { cx: cx.toFixed(1), cy: cy.toFixed(1), r: 13.5 });
const band = [[285,940,22],[320,955,42],[360,930,54],[400,908,52],[440,875,42],[480,852,32],[520,812,30],[560,785,30],[600,770,25],[640,722,32],[680,675,40],[720,628,44],[760,605,42],[800,595,44],[840,605,46],[880,630,44],[920,635,50],[945,625,56]];
for (let i = 0; i < 820; i++) {
  const x = 285 + Math.pow(rnd(), .9) * 655;
  dot(x, lerp(band, x, 1) + (rnd() + rnd() - 1) * lerp(band, x, 2) * 1.15);
}
for (let i = 0; i < 62; i++) { const x = 925 + rnd() * 105; dot(x, 625 + (rnd() + rnd() - 1) * 100); }
[[264,957],[312,1008],[318,990],[335,988],[347,982],[411,981],[432,952],[400,962],[351,892],[392,867],[430,840],[462,822],[576,738],[560,762],[545,838],[567,825],[587,815],[612,806],[656,749],[704,750],[732,704],[784,690],[813,668],[698,612],[724,588],[795,555],[812,556],[836,562],[880,580],[883,695],[900,705],[892,482],[923,474],[952,451],[980,445],[1008,451],[988,488],[996,480],[1015,475],[1025,493],[1011,510],[1008,492],[968,522],[983,520],[991,525],[914,550],[931,538],[950,545],[982,545],[985,556],[1005,572],[1000,586],[1036,571],[1026,610],[1022,637],[1018,650],[1050,665],[1048,688],[1040,700],[1030,715],[1036,733],[1013,738],[1006,754],[996,776],[965,758],[954,766],[960,730],[941,722],[995,715],[990,700],[970,700],[1020,680],[1035,670],[1034,228]].forEach(([x, y]) => dot(x, y));
</script>
</body>
</html>
